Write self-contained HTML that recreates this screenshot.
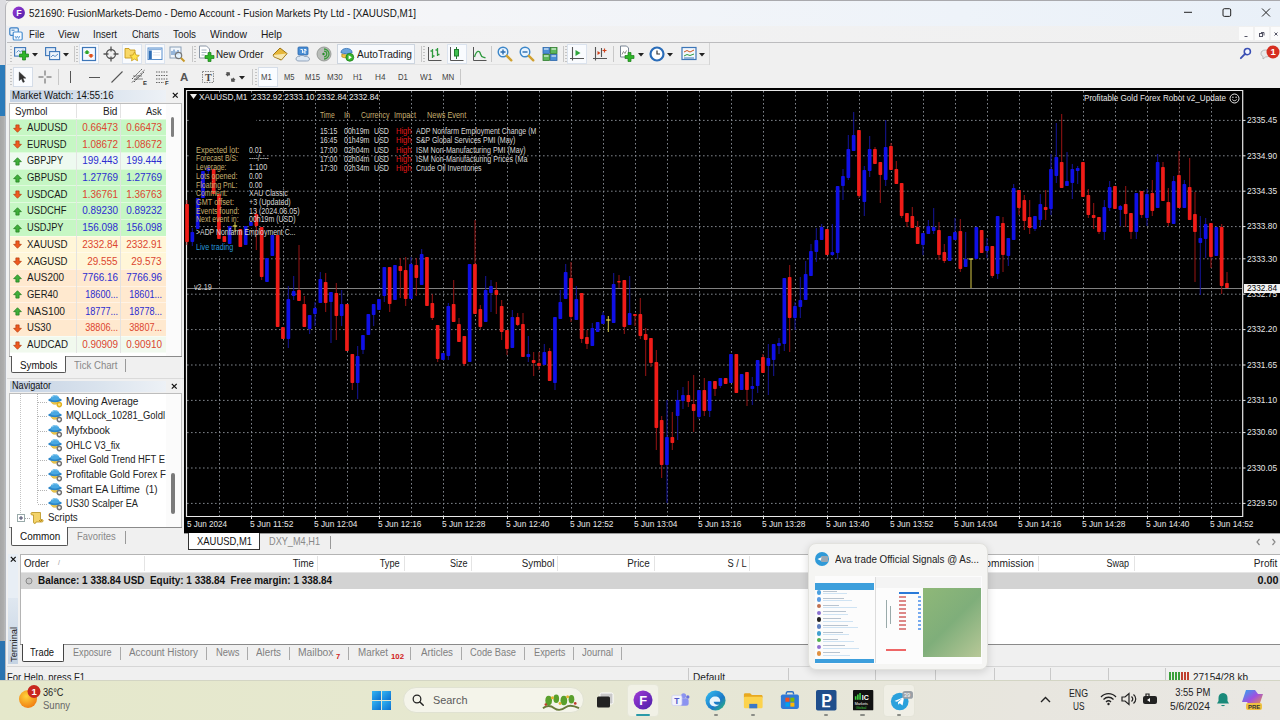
<!DOCTYPE html>
<html lang="en"><head><meta charset="utf-8"><title>521690: FusionMarkets-Demo - Demo Account - [XAUUSD,M1]</title>
<style>
*{box-sizing:border-box;margin:0;padding:0}
html,body{width:1280px;height:720px;overflow:hidden;background:#f0f0f0}
body{font-family:"Liberation Sans","DejaVu Sans",sans-serif;font-size:12px;color:#111}
#root{position:relative;width:1280px;height:720px;overflow:hidden;background:#f0f0f0}
.abs{position:absolute}
.t{position:absolute;white-space:nowrap;line-height:1}
svg{position:absolute;overflow:visible}

</style></head>
<body>
<div id="root">
<div class="abs" style="left:0px;top:0px;width:6px;height:64.5px;background:#dddde1;"></div>
<div class="abs" style="left:0px;top:64.5px;width:6px;height:51px;background:#2b7bba;"></div>
<div class="abs" style="left:0px;top:115.5px;width:6px;height:526px;background:linear-gradient(90deg,#a6a6a6,#adadad 60%,#c4c4c4);"></div>
<div class="abs" style="left:0px;top:641px;width:6px;height:39px;background:#2a73b0;"></div>
<div class="abs" style="left:6px;top:0px;width:1274px;height:1px;background:#a9a9ad;"></div>
<div class="abs" style="left:5px;top:0.8px;width:1275px;height:25px;background:linear-gradient(90deg,#f6f5f3 0%,#f4f5f8 35%,#eef3f9 75%,#e9f0f8 100%);border-top-left-radius:6px;border-left:1px solid #b5b5b9"></div>
<div class="abs" style="left:5px;top:25px;width:2px;height:655px;background:#eef0f4;border-left:1px solid #b5b8be"></div>
<svg style="left:11.700px;top:5.900px" width="13.500" height="13.500" viewBox="0 0 16 16"><defs><linearGradient id="gF" x1="0" y1="0" x2="1" y2="1"><stop offset="0" stop-color="#a13bd6"/><stop offset="1" stop-color="#4b1fa8"/></linearGradient></defs><circle cx="8" cy="8" r="7.3" fill="url(#gF)"/><text x="8.200" y="11.700" text-anchor="middle" font-family="Liberation Sans,sans-serif" font-weight="bold" font-size="10.500" fill="#fff">F</text></svg>
<span class="t " style="left:28.7px;transform-origin:0 50%;top:7.8px;font-size:10.5px;color:#151515;transform:scaleX(0.9393);">521690: FusionMarkets-Demo - Demo Account - Fusion Markets Pty Ltd - [XAUUSD,M1]</span>
<svg style="left:1170px;top:0px" width="110" height="25" viewBox="0 0 110 25"><g stroke="#222" stroke-width="1" fill="none"><path d="M14 12.300h8"/><rect x="53" y="8.700" width="7.700" height="7.700" rx="1.300"/><path d="M92 8.500l8 8M100 8.500l-8 8"/></g></svg>
<div class="abs" style="left:7px;top:25.5px;width:1273px;height:17.5px;background:linear-gradient(90deg,#eef0f4,#f2f2f3 30%,#f0f0f0);"></div>
<div class="abs" style="left:7px;top:42px;width:1273px;height:1px;background:#bcbcbe;"></div>
<svg style="left:9px;top:27px" width="14" height="14" viewBox="0 0 14 14"><rect x="0.8" y="0.8" width="8.5" height="7.5" rx="1.2" fill="#eaf3fb" stroke="#3a7fc4" stroke-width="1.2"/><rect x="4.2" y="5" width="9" height="8" rx="1.2" fill="#f7fbff" stroke="#4a8fd0" stroke-width="1.2"/><path d="M6 9l1.2 2.4 1.2-2.4 1.2 2.4L10.800 9" stroke="#5b9ad6" stroke-width="0.9" fill="none"/><path d="M2.500 3.200h3" stroke="#3a7fc4" stroke-width="1"/></svg>
<span class="t " style="left:28.7px;transform-origin:0 50%;top:28.5px;font-size:10.5px;color:#1a1a1a;transform:scaleX(0.9161);">File</span>
<span class="t " style="left:58px;transform-origin:0 50%;top:28.5px;font-size:10.5px;color:#1a1a1a;transform:scaleX(0.9526);">View</span>
<span class="t " style="left:93.2px;transform-origin:0 50%;top:28.5px;font-size:10.5px;color:#1a1a1a;transform:scaleX(0.9139);">Insert</span>
<span class="t " style="left:131.5px;transform-origin:0 50%;top:28.5px;font-size:10.5px;color:#1a1a1a;transform:scaleX(0.8730);">Charts</span>
<span class="t " style="left:173px;transform-origin:0 50%;top:28.5px;font-size:10.5px;color:#1a1a1a;transform:scaleX(0.9383);">Tools</span>
<span class="t " style="left:210px;transform-origin:0 50%;top:28.5px;font-size:10.5px;color:#1a1a1a;transform:scaleX(0.9907);">Window</span>
<span class="t " style="left:260.7px;transform-origin:0 50%;top:28.5px;font-size:10.5px;color:#1a1a1a;transform:scaleX(0.9724);">Help</span>
<div class="abs" style="left:1238.8px;top:27.4px;width:13.8px;height:12.6px;background:#fbfbfb;"></div>
<div class="abs" style="left:1254.8px;top:27.4px;width:13.8px;height:12.6px;background:#fbfbfb;"></div>
<div class="abs" style="left:1271px;top:27.4px;width:13.8px;height:12.6px;background:#fbfbfb;"></div>
<svg style="left:1239px;top:28px" width="41" height="12" viewBox="0 0 41 12"><g stroke="#556" stroke-width="1" fill="none"><path d="M5.500 8.500h3"/><rect x="20.500" y="5.500" width="3" height="3"/><path d="M22 4.500h3v3"/><path d="M35.500 4.500l3 3M38.500 4.500l-3 3"/></g></svg>
<div class="abs" style="left:7px;top:43px;width:1273px;height:46px;background:#f0f0f0;"></div>
<div class="abs" style="left:7px;top:64px;width:702px;height:1px;background:#e2e2e2;"></div>
<div class="abs" style="left:10px;top:46px;width:2px;height:16px;background:repeating-linear-gradient(#c4c4c4 0 1px,transparent 1px 3px)"></div>
<svg style="left:14px;top:46px" width="16" height="16" viewBox="0 0 16 16"><rect x="0.6" y="1.600" width="11" height="8.500" fill="#e9f2fb" stroke="#3c76b8" stroke-width="1.100"/><path d="M2.500 6.500l2-2 2 1.500 2.500-2.500" stroke="#3c76b8" fill="none" stroke-width=".8"/><path d="M7 10.500h3v-3h3v3h3v3h-3v3h-3v-3H7z" transform="translate(-1.500,-2.500)" fill="#2fb52a" stroke="#1b7d18" stroke-width=".7"/></svg>
<svg style="left:32px;top:53px" width="6" height="4" viewBox="0 0 6 4"><path d="M0 0h6L3 3.500z" fill="#222"/></svg>
<svg style="left:45px;top:46px" width="16" height="16" viewBox="0 0 16 16"><rect x="0.6" y="1.600" width="10" height="8" fill="#dfeaf7" stroke="#3c76b8" stroke-width="1.100"/><rect x="4.600" y="5.600" width="10" height="8" fill="#eef5fc" stroke="#3c76b8" stroke-width="1.100"/><path d="M6 11l2-2 2 1.500 3-2.500" stroke="#3c76b8" fill="none" stroke-width=".8"/></svg>
<svg style="left:63px;top:53px" width="6" height="4" viewBox="0 0 6 4"><path d="M0 0h6L3 3.500z" fill="#222"/></svg>
<div class="abs" style="left:74px;top:46px;width:1px;height:16px;background:#c8c8c8"></div>
<div class="abs" style="left:76px;top:46px;width:2px;height:16px;background:repeating-linear-gradient(#c4c4c4 0 1px,transparent 1px 3px)"></div>
<div class="abs" style="left:79px;top:44px;width:20px;height:20px;background:#f9fbfe;border:1px solid #dbe3ee"></div>
<svg style="left:81px;top:46px" width="16" height="16" viewBox="0 0 16 16"><rect x="1.500" y="1.500" width="13" height="13" fill="#f4f9ff" stroke="#3c76b8" stroke-width="1.200"/><path d="M4.500 4l2.800 2.500H6v1.500H3V6.500h-1.300z" transform="translate(1.500,0)" fill="#2fa52a"/><path d="M10 12l-2.800-2.500H8.500V8h3v1.500h1.300z" fill="#e0521c"/></svg>
<svg style="left:103px;top:46px" width="16" height="16" viewBox="0 0 16 16"><circle cx="8" cy="8" r="4.500" fill="none" stroke="#555" stroke-width="1.300"/><path d="M8 0.500v5M8 10.500v5M.500 8h5M10.500 8h5" stroke="#555" stroke-width="1.300"/></svg>
<div class="abs" style="left:122px;top:44px;width:20px;height:20px;background:#f9fbfe;border:1px solid #dbe3ee"></div>
<svg style="left:124px;top:46px" width="16" height="16" viewBox="0 0 16 16"><path d="M1 2.500h4l1 1.500h5v8H1z" fill="#f8d867" stroke="#c69a1a" stroke-width=".9"/><path d="M10.500 6l1.500 3 3.300.4-2.400 2.200.7 3.200-3.100-1.700-3 1.700.6-3.200L5.800 9.400 9 9z" fill="#ffe24a" stroke="#c69a1a" stroke-width=".8"/></svg>
<div class="abs" style="left:145px;top:44px;width:20px;height:20px;background:#f9fbfe;border:1px solid #dbe3ee"></div>
<svg style="left:147px;top:46px" width="16" height="16" viewBox="0 0 16 16"><rect x="1" y="2" width="14" height="11.500" fill="#fff" stroke="#5a8fcc" stroke-width="1"/><rect x="1.600" y="2.600" width="12.800" height="1.500" fill="#8db4e0"/><rect x="1.800" y="4.500" width="3" height="8.500" fill="#2f6db4"/><path d="M6 6.500h7M6 9h7" stroke="#d5dde8" stroke-width=".7"/></svg>
<svg style="left:169px;top:46px" width="17" height="17" viewBox="0 0 17 17"><rect x="1" y="1" width="11" height="11" fill="#f1f6fb" stroke="#8aa0b8" stroke-width="1"/><path d="M3 9V5M5 9V3.500M7 9V5.500M9 9V4" stroke="#3c76b8" stroke-width="1"/><circle cx="9.500" cy="9.500" r="3.200" fill="#dff1ff" fill-opacity=".8" stroke="#777" stroke-width="1.200"/><path d="M12 12l3.500 3.500" stroke="#c89a2a" stroke-width="2"/></svg>
<div class="abs" style="left:192px;top:46px;width:1px;height:16px;background:#c8c8c8"></div>
<div class="abs" style="left:194px;top:46px;width:2px;height:16px;background:repeating-linear-gradient(#c4c4c4 0 1px,transparent 1px 3px)"></div>
<svg style="left:198px;top:45px" width="17" height="18" viewBox="0 0 17 18"><path d="M1.500 1h7l3 3v9h-10z" fill="#fff" stroke="#8a96a6" stroke-width="1"/><path d="M3.500 5h5M3.500 7.500h5M3.500 10h3" stroke="#9ab" stroke-width=".9"/><path d="M7 10.500h3v-3h3v3h3v3h-3v3h-3v-3H7z" transform="translate(0,0)" fill="#2fb52a" stroke="#1b7d18" stroke-width=".7"/></svg>
<span class="t " style="left:216.2px;transform-origin:0 50%;top:48.8px;font-size:10.5px;color:#1a1a1a;transform:scaleX(0.9357);">New Order</span>
<svg style="left:272px;top:47px" width="16" height="14" viewBox="0 0 16 14"><path d="M1 8l7-7 7 5.500-6 6.500z" fill="#e7b73a" stroke="#9c7413" stroke-width="1"/><path d="M1 8l1 2 7.500 3 5.500-6.500" fill="#f7e7b0" stroke="#9c7413" stroke-width=".8"/></svg>
<svg style="left:295px;top:46px" width="16" height="16" viewBox="0 0 16 16"><rect x="3" y="1" width="10" height="8" rx="1" fill="#4a8fd6" stroke="#2b66aa" stroke-width=".8"/><path d="M5.500 3.500h2v3.500M9 3.500h2v1.500H9v2h2" stroke="#fff" stroke-width=".9" fill="none"/><path d="M1 13c0-2 2-3 3.500-2.500 1-1.500 4-1.500 5 0 2-.5 5 .5 5 2.500s-2 2-3 2H4c-1.500 0-3-.5-3-2z" fill="#dde8f4" stroke="#7d93ad" stroke-width=".8"/></svg>
<svg style="left:316px;top:46px" width="16" height="16" viewBox="0 0 16 16"><circle cx="8" cy="8" r="7" fill="#b9bdb9" stroke="#8a8e8a" stroke-width=".8"/><path d="M8 3a5 5 0 0 1 0 10M8 5.200a2.800 2.800 0 0 1 0 5.600" stroke="#3a9a3a" stroke-width="1.300" fill="none"/><circle cx="7.500" cy="8" r="1.200" fill="#2b8a2b"/></svg>
<div class="abs" style="left:337px;top:44px;width:78px;height:20px;background:#f7f9fc;border:1px solid #cdd5df"></div>
<svg style="left:339px;top:46.500px" width="16" height="15" viewBox="0 0 17 16"><path d="M2 6c0-3 3-4.500 6-4.500S14 3 14 6c-2 1.500-10 1.500-12 0z" fill="#6aa3dc" stroke="#2f6db4" stroke-width=".8"/><path d="M3 7.500c2 1.200 8 1.200 10 0v3c-2 1.500-8 1.500-10 0z" fill="#f0c64a" stroke="#b58a18" stroke-width=".8"/><circle cx="11.500" cy="11" r="4.200" fill="#35b52e" stroke="#1c7d18" stroke-width=".8"/><path d="M10.200 8.800v4.400l3.500-2.200z" fill="#fff"/></svg>
<span class="t " style="left:357.4px;transform-origin:0 50%;top:48.8px;font-size:10.5px;color:#1a1a1a;transform:scaleX(0.9681);">AutoTrading</span>
<div class="abs" style="left:421px;top:46px;width:1px;height:16px;background:#c8c8c8"></div>
<div class="abs" style="left:423px;top:46px;width:2px;height:16px;background:repeating-linear-gradient(#c4c4c4 0 1px,transparent 1px 3px)"></div>
<svg style="left:427px;top:46px" width="16" height="16" viewBox="0 0 16 16"><path d="M1.500 1v13.500h13" stroke="#555" stroke-width="1" fill="none"/><path d="M5.500 3v9M3.500 5h2M5.500 10h2M10.500 2v8M8.500 4h2M10.500 8.500h2" stroke="#2e9a3e" stroke-width="1.300" fill="none"/></svg>
<div class="abs" style="left:447px;top:44px;width:20px;height:20px;background:#f9fbfe;border:1px solid #dbe3ee"></div>
<svg style="left:449px;top:46px" width="16" height="16" viewBox="0 0 16 16"><path d="M1.500 1v13.500h13" stroke="#555" stroke-width="1" fill="none"/><path d="M7.500 1v12" stroke="#1f7d2f" stroke-width="1"/><rect x="5.500" y="3.500" width="4" height="6.500" fill="#3fbf4f" stroke="#1f7d2f" stroke-width="1"/></svg>
<svg style="left:472px;top:46px" width="16" height="16" viewBox="0 0 16 16"><path d="M1.500 1v13.500h13" stroke="#555" stroke-width="1" fill="none"/><path d="M2.500 11c2-7 5-7 6-3s3 3 5 4" stroke="#2e9a3e" stroke-width="1.300" fill="none"/></svg>
<div class="abs" style="left:491px;top:46px;width:1px;height:16px;background:#c8c8c8"></div>
<svg style="left:497px;top:46px" width="16" height="16" viewBox="0 0 16 16"><circle cx="6" cy="6" r="4.800" fill="#e8f4ff" stroke="#3c86c8" stroke-width="1.400"/><path d="M3.500 6h5M6 3.500v5" stroke="#2a6cb0" stroke-width="1.400"/><path d="M9.800 9.800l4.500 4.500" stroke="#d0a030" stroke-width="2.400" stroke-linecap="round"/></svg>
<svg style="left:519px;top:46px" width="16" height="16" viewBox="0 0 16 16"><circle cx="6" cy="6" r="4.800" fill="#e8f4ff" stroke="#3c86c8" stroke-width="1.400"/><path d="M3.500 6h5" stroke="#2a6cb0" stroke-width="1.400"/><path d="M9.800 9.800l4.500 4.500" stroke="#d0a030" stroke-width="2.400" stroke-linecap="round"/></svg>
<svg style="left:542px;top:46px" width="16" height="16" viewBox="0 0 16 16"><rect x="1" y="1.500" width="6.500" height="6" fill="#4a8fd6" stroke="#2b66aa" stroke-width=".8"/><rect x="8.500" y="1.500" width="6.500" height="6" fill="#5cb85c" stroke="#2f7d2f" stroke-width=".8"/><rect x="1" y="8.500" width="6.500" height="6" fill="#5cb85c" stroke="#2f7d2f" stroke-width=".8"/><rect x="8.500" y="8.500" width="6.500" height="6" fill="#4a8fd6" stroke="#2b66aa" stroke-width=".8"/><path d="M2 3h4.500M9.500 3H14M2 10h4.500M9.500 10H14" stroke="#fff" stroke-width="1"/></svg>
<div class="abs" style="left:563px;top:46px;width:1px;height:16px;background:#c8c8c8"></div>
<div class="abs" style="left:565px;top:46px;width:2px;height:16px;background:repeating-linear-gradient(#c4c4c4 0 1px,transparent 1px 3px)"></div>
<div class="abs" style="left:567px;top:44px;width:20px;height:20px;background:#f9fbfe;border:1px solid #dbe3ee"></div>
<svg style="left:569px;top:46px" width="16" height="16" viewBox="0 0 16 16"><path d="M3.500 1v13.500M1 12.500h14" stroke="#555" stroke-width="1.100" fill="none"/><path d="M6.500 4v6l5-3z" fill="#2fa53a"/></svg>
<svg style="left:592px;top:46px" width="16" height="16" viewBox="0 0 16 16"><path d="M3.500 1v13.500M1 12.500h14M9.500 2v9" stroke="#555" stroke-width="1.100" fill="none"/><path d="M10.500 4.500h4M12.500 2.500v4" stroke="#d0421c" stroke-width="1.200"/><path d="M8.500 7l-3-2v4z" fill="#d0421c"/></svg>
<div class="abs" style="left:613px;top:46px;width:1px;height:16px;background:#c8c8c8"></div>
<svg style="left:619px;top:45px" width="17" height="18" viewBox="0 0 17 18"><path d="M1.500 1h6l2 2v9h-8z" fill="#fff" stroke="#7a8696" stroke-width="1"/><path d="M3 9.500l1.500-3 1.500 2 1.500-3" stroke="#777" stroke-width=".8" fill="none"/><path d="M6 10.500h3v-3h3v3h3v3h-3v3H9v-3H6z" fill="#2fb52a" stroke="#1b7d18" stroke-width=".7"/></svg>
<svg style="left:638px;top:53px" width="6" height="4" viewBox="0 0 6 4"><path d="M0 0h6L3 3.500z" fill="#222"/></svg>
<svg style="left:649px;top:46px" width="16" height="16" viewBox="0 0 16 16"><circle cx="8" cy="8" r="6.500" fill="#fff" stroke="#2a6cb8" stroke-width="2.200"/><path d="M8 4.500V8h3" stroke="#333" stroke-width="1.200" fill="none"/></svg>
<svg style="left:667px;top:53px" width="6" height="4" viewBox="0 0 6 4"><path d="M0 0h6L3 3.500z" fill="#222"/></svg>
<svg style="left:681px;top:46px" width="16" height="16" viewBox="0 0 16 16"><rect x="1" y="1.500" width="14" height="12" fill="#f2f7fc" stroke="#3c76b8" stroke-width="1.200"/><path d="M3 6l3-1.500 3 1.500 4-2" stroke="#d0521c" stroke-width="1" fill="none"/><path d="M3 10l3-1.500 3 1 4-1.500" stroke="#2e9a3e" stroke-width="1" fill="none"/><path d="M3 12h10" stroke="#3c76b8" stroke-width="1"/></svg>
<svg style="left:699px;top:53px" width="6" height="4" viewBox="0 0 6 4"><path d="M0 0h6L3 3.500z" fill="#222"/></svg>
<div class="abs" style="left:709px;top:43px;width:1px;height:22px;background:#d5d5d5;"></div>
<svg style="left:1238.500px;top:47px" width="13" height="13" viewBox="0 0 14 14"><circle cx="9" cy="5" r="3.300" fill="#f4f7ff" stroke="#3a4fb4" stroke-width="1.700"/><path d="M6.500 7.500L2 12" stroke="#3a4fb4" stroke-width="2" stroke-linecap="round"/></svg>
<svg style="left:1258px;top:44px" width="22" height="20" viewBox="0 0 22 20"><path d="M3 9.500c0-2 1.600-3.500 4.500-3.500s4.500 1.500 4.500 3.500-1.600 3.500-4.500 3.500l-2.500 2v-2.500C3.800 12 3 10.800 3 9.500z" fill="#e9e9e9" stroke="#aaa" stroke-width=".8"/><circle cx="15" cy="8" r="6.500" fill="#d62d1f"/></svg>
<span class="t " style="left:1270.5px;transform-origin:0 50%;top:47.2px;font-size:9.5px;color:#fff;font-weight:bold;">1</span>
<div class="abs" style="left:10px;top:69px;width:2px;height:16px;background:repeating-linear-gradient(#c4c4c4 0 1px,transparent 1px 3px)"></div>
<div class="abs" style="left:13px;top:67px;width:20px;height:20px;background:#fafcff;border:1px solid #d5dde8"></div>
<svg style="left:18px;top:70.500px" width="9.500" height="13" viewBox="0 0 12 16"><path d="M1.500 1v11l2.800-2.500 2 4.700 1.900-.8-2-4.600H10z" fill="#333" stroke="#222" stroke-width=".5"/></svg>
<svg style="left:37px;top:69px" width="16" height="16" viewBox="0 0 16 16"><path d="M8 1.500v5M8 9.500v5M1.500 8h5M9.500 8h5" stroke="#4a4a4a" stroke-width=".9"/></svg>
<div class="abs" style="left:58px;top:69px;width:1px;height:16px;background:#c8c8c8"></div>
<div class="abs" style="left:70px;top:71px;width:1px;height:12px;background:#555;"></div>
<div class="abs" style="left:89px;top:77px;width:11px;height:1px;background:#555;"></div>
<svg style="left:110px;top:70px" width="14" height="14" viewBox="0 0 14 14"><path d="M1.500 12.500L12.500 1.500" stroke="#555" stroke-width="1.100"/></svg>
<svg style="left:131px;top:68px" width="17" height="17" viewBox="0 0 17 17"><path d="M1 11L11 1M3 14L13 4M1 14.500L14 1.500" stroke="#555" stroke-width="1" stroke-dasharray="2 1"/><path d="M2 8h9M3 11h9" stroke="#555" stroke-width=".7"/></svg>
<span class="t " style="left:143px;transform-origin:0 50%;top:80.0px;font-size:6px;color:#333;font-weight:bold;">E</span>
<svg style="left:155px;top:70px" width="15" height="14" viewBox="0 0 15 14"><path d="M1 2h12M1 5.500h12M1 9h12M1 12.500h8" stroke="#666" stroke-width="1" stroke-dasharray="1.500 1"/></svg>
<span class="t " style="left:165px;transform-origin:0 50%;top:80.0px;font-size:6px;color:#333;font-weight:bold;">F</span>
<span class="t " style="left:180px;transform-origin:0 50%;top:71.8px;font-size:11.5px;color:#555;font-weight:bold;">A</span>
<svg style="left:201px;top:70px" width="14" height="14" viewBox="0 0 14 14"><rect x="1.500" y="1.500" width="11" height="11" fill="none" stroke="#888" stroke-width="1" stroke-dasharray="1.500 1"/></svg>
<span class="t " style="left:205px;transform-origin:0 50%;top:72.5px;font-size:10px;color:#444;font-weight:bold;font-family:'Liberation Serif',serif;">T</span>
<svg style="left:224px;top:71px" width="13" height="12" viewBox="0 0 13 12"><path d="M1 3l3-2.500 3 2.500H5.500v2h-3V3z" fill="#555" transform="rotate(45 4 3)"/><path d="M6 9l3 2.500 3-2.500h-1.500V7h-3v2z" fill="#555" transform="rotate(45 9 9)"/></svg>
<svg style="left:239px;top:76px" width="6" height="4" viewBox="0 0 6 4"><path d="M0 0h6L3 3.500z" fill="#222"/></svg>
<div class="abs" style="left:252px;top:69px;width:1px;height:16px;background:#c8c8c8"></div>
<div class="abs" style="left:255px;top:69px;width:2px;height:16px;background:repeating-linear-gradient(#c4c4c4 0 1px,transparent 1px 3px)"></div>
<div class="abs" style="left:258px;top:67px;width:20px;height:20px;background:#fafcff;border:1px solid #d5dde8"></div>
<span class="t " style="left:261.2px;transform-origin:0 50%;top:72.8px;font-size:8.5px;color:#444;transform:scaleX(0.9146);">M1</span>
<span class="t " style="left:284px;transform-origin:0 50%;top:72.8px;font-size:8.5px;color:#444;transform:scaleX(0.8892);">M5</span>
<span class="t " style="left:304.6px;transform-origin:0 50%;top:72.8px;font-size:8.5px;color:#444;transform:scaleX(0.9071);">M15</span>
<span class="t " style="left:327px;transform-origin:0 50%;top:72.8px;font-size:8.5px;color:#444;transform:scaleX(0.9434);">M30</span>
<span class="t " style="left:352.5px;transform-origin:0 50%;top:72.8px;font-size:8.5px;color:#444;transform:scaleX(0.8743);">H1</span>
<span class="t " style="left:374.5px;transform-origin:0 50%;top:72.8px;font-size:8.5px;color:#444;transform:scaleX(0.9663);">H4</span>
<span class="t " style="left:397.8px;transform-origin:0 50%;top:72.8px;font-size:8.5px;color:#444;transform:scaleX(0.9019);">D1</span>
<span class="t " style="left:419.7px;transform-origin:0 50%;top:72.8px;font-size:8.5px;color:#444;transform:scaleX(0.9647);">W1</span>
<span class="t " style="left:441.7px;transform-origin:0 50%;top:72.8px;font-size:8.5px;color:#444;transform:scaleX(0.9304);">MN</span>
<div class="abs" style="left:460px;top:69px;width:1px;height:16px;background:#c8c8c8"></div>
<div class="abs" style="left:7px;top:88px;width:177px;height:465px;background:#f0f0f0;"></div>
<div class="abs" style="left:10px;top:90px;width:156px;height:11.5px;background:linear-gradient(90deg,#c5d2e3,#dbe4ee 60%,#edf1f6);"></div>
<span class="t " style="left:11.7px;transform-origin:0 50%;top:91.0px;font-size:10px;color:#111;transform:scaleX(0.9594);">Market Watch: 14:55:16</span>
<svg style="left:171.500px;top:92.300px" width="6.500" height="6.500" viewBox="0 0 8 8"><path d="M1 1l6 6M7 1l-6 6" stroke="#111" stroke-width="1.500"/></svg>
<div class="abs" style="left:9px;top:103px;width:173px;height:253.5px;background:#fff;border:1px solid #bdbdbd;border-bottom:none"></div>
<span class="t " style="left:14.6px;transform-origin:0 50%;top:107.0px;font-size:10px;color:#222;transform:scaleX(0.9746);">Symbol</span>
<span class="t " style="right:1162.5px;transform-origin:100% 50%;top:107.0px;font-size:10px;color:#222;transform:scaleX(1.0032);">Bid</span>
<span class="t " style="right:1118.3px;transform-origin:100% 50%;top:107.0px;font-size:10px;color:#222;transform:scaleX(0.9418);">Ask</span>
<div class="abs" style="left:76px;top:104px;width:1px;height:14px;background:#e3e3e3;"></div>
<div class="abs" style="left:120px;top:104px;width:1px;height:14px;background:#e3e3e3;"></div>
<div class="abs" style="left:10px;top:119.2px;width:156px;height:16.68px;background:#c6f7c4;"></div>
<svg style="left:13.3px;top:123.6px" width="9" height="9" viewBox="0 0 10 10"><path d="M5 9.200L9.300 4.800H6.800V1H3.200v3.800H.7z" fill="#ef5a1f" stroke="#b23a0c" stroke-width=".8"/></svg>
<span class="t " style="left:26.5px;transform-origin:0 50%;top:123.0px;font-size:10px;color:#1a1a1a;transform:scaleX(0.9591);">AUDUSD</span>
<span class="t " style="right:1162.0px;transform-origin:100% 50%;top:123.0px;font-size:10px;color:#dc4630;transform:scaleX(0.9931);">0.66473</span>
<span class="t " style="right:1118.3px;transform-origin:100% 50%;top:123.0px;font-size:10px;color:#dc4630;transform:scaleX(0.9931);">0.66473</span>
<div class="abs" style="left:10px;top:135.9px;width:156px;height:16.68px;background:#c6f7c4;"></div>
<svg style="left:13.3px;top:140.29999999999998px" width="9" height="9" viewBox="0 0 10 10"><path d="M5 9.200L9.300 4.800H6.800V1H3.200v3.800H.7z" fill="#ef5a1f" stroke="#b23a0c" stroke-width=".8"/></svg>
<span class="t " style="left:26.5px;transform-origin:0 50%;top:139.7px;font-size:10px;color:#1a1a1a;transform:scaleX(0.9354);">EURUSD</span>
<span class="t " style="right:1162.0px;transform-origin:100% 50%;top:139.7px;font-size:10px;color:#dc4630;transform:scaleX(0.9931);">1.08672</span>
<span class="t " style="right:1118.3px;transform-origin:100% 50%;top:139.7px;font-size:10px;color:#dc4630;transform:scaleX(0.9931);">1.08672</span>
<div class="abs" style="left:10px;top:152.6px;width:156px;height:16.68px;background:#eefaf0;"></div>
<svg style="left:13.3px;top:157.0px" width="9" height="9" viewBox="0 0 10 10"><path d="M5 .800L9.300 5.200H6.800V9H3.200V5.200H.7z" fill="#3fae3a" stroke="#1f7a1c" stroke-width=".8"/></svg>
<span class="t " style="left:26.5px;transform-origin:0 50%;top:156.4px;font-size:10px;color:#1a1a1a;transform:scaleX(0.9123);">GBPJPY</span>
<span class="t " style="right:1162.0px;transform-origin:100% 50%;top:156.4px;font-size:10px;color:#2c2cd0;transform:scaleX(0.9931);">199.443</span>
<span class="t " style="right:1118.3px;transform-origin:100% 50%;top:156.4px;font-size:10px;color:#2c2cd0;transform:scaleX(0.9931);">199.444</span>
<div class="abs" style="left:10px;top:169.2px;width:156px;height:16.68px;background:#c6f7c4;"></div>
<svg style="left:13.3px;top:173.7px" width="9" height="9" viewBox="0 0 10 10"><path d="M5 .800L9.300 5.200H6.800V9H3.200V5.200H.7z" fill="#3fae3a" stroke="#1f7a1c" stroke-width=".8"/></svg>
<span class="t " style="left:26.5px;transform-origin:0 50%;top:173.1px;font-size:10px;color:#1a1a1a;transform:scaleX(0.9471);">GBPUSD</span>
<span class="t " style="right:1162.0px;transform-origin:100% 50%;top:173.1px;font-size:10px;color:#2c2cd0;transform:scaleX(0.9931);">1.27769</span>
<span class="t " style="right:1118.3px;transform-origin:100% 50%;top:173.1px;font-size:10px;color:#2c2cd0;transform:scaleX(0.9931);">1.27769</span>
<div class="abs" style="left:10px;top:185.9px;width:156px;height:16.68px;background:#c6f7c4;"></div>
<svg style="left:13.3px;top:190.4px" width="9" height="9" viewBox="0 0 10 10"><path d="M5 9.200L9.300 4.800H6.800V1H3.200v3.800H.7z" fill="#ef5a1f" stroke="#b23a0c" stroke-width=".8"/></svg>
<span class="t " style="left:26.5px;transform-origin:0 50%;top:189.8px;font-size:10px;color:#1a1a1a;transform:scaleX(0.9591);">USDCAD</span>
<span class="t " style="right:1162.0px;transform-origin:100% 50%;top:189.8px;font-size:10px;color:#dc4630;transform:scaleX(0.9931);">1.36761</span>
<span class="t " style="right:1118.3px;transform-origin:100% 50%;top:189.8px;font-size:10px;color:#dc4630;transform:scaleX(0.9931);">1.36763</span>
<div class="abs" style="left:10px;top:202.6px;width:156px;height:16.68px;background:#c6f7c4;"></div>
<svg style="left:13.3px;top:207.0px" width="9" height="9" viewBox="0 0 10 10"><path d="M5 .800L9.300 5.200H6.800V9H3.200V5.200H.7z" fill="#3fae3a" stroke="#1f7a1c" stroke-width=".8"/></svg>
<span class="t " style="left:26.5px;transform-origin:0 50%;top:206.4px;font-size:10px;color:#1a1a1a;transform:scaleX(0.9480);">USDCHF</span>
<span class="t " style="right:1162.0px;transform-origin:100% 50%;top:206.4px;font-size:10px;color:#2c2cd0;transform:scaleX(0.9931);">0.89230</span>
<span class="t " style="right:1118.3px;transform-origin:100% 50%;top:206.4px;font-size:10px;color:#2c2cd0;transform:scaleX(0.9931);">0.89232</span>
<div class="abs" style="left:10px;top:219.3px;width:156px;height:16.68px;background:#c6f7c4;"></div>
<svg style="left:13.3px;top:223.7px" width="9" height="9" viewBox="0 0 10 10"><path d="M5 .800L9.300 5.200H6.800V9H3.200V5.200H.7z" fill="#3fae3a" stroke="#1f7a1c" stroke-width=".8"/></svg>
<span class="t " style="left:26.5px;transform-origin:0 50%;top:223.1px;font-size:10px;color:#1a1a1a;transform:scaleX(0.9251);">USDJPY</span>
<span class="t " style="right:1162.0px;transform-origin:100% 50%;top:223.1px;font-size:10px;color:#2c2cd0;transform:scaleX(0.9931);">156.098</span>
<span class="t " style="right:1118.3px;transform-origin:100% 50%;top:223.1px;font-size:10px;color:#2c2cd0;transform:scaleX(0.9931);">156.098</span>
<div class="abs" style="left:10px;top:236.0px;width:156px;height:16.68px;background:#fff6d8;"></div>
<svg style="left:13.3px;top:240.4px" width="9" height="9" viewBox="0 0 10 10"><path d="M5 9.200L9.300 4.800H6.800V1H3.200v3.800H.7z" fill="#ef5a1f" stroke="#b23a0c" stroke-width=".8"/></svg>
<span class="t " style="left:26.5px;transform-origin:0 50%;top:239.8px;font-size:10px;color:#1a1a1a;transform:scaleX(0.9718);">XAUUSD</span>
<span class="t " style="right:1162.0px;transform-origin:100% 50%;top:239.8px;font-size:10px;color:#dc4630;transform:scaleX(0.9931);">2332.84</span>
<span class="t " style="right:1118.3px;transform-origin:100% 50%;top:239.8px;font-size:10px;color:#dc4630;transform:scaleX(0.9931);">2332.91</span>
<div class="abs" style="left:10px;top:252.6px;width:156px;height:16.68px;background:#fff6d8;"></div>
<svg style="left:13.3px;top:257.1px" width="9" height="9" viewBox="0 0 10 10"><path d="M5 9.200L9.300 4.800H6.800V1H3.200v3.800H.7z" fill="#ef5a1f" stroke="#b23a0c" stroke-width=".8"/></svg>
<span class="t " style="left:26.5px;transform-origin:0 50%;top:256.5px;font-size:10px;color:#1a1a1a;transform:scaleX(0.9590);">XAGUSD</span>
<span class="t " style="right:1162.0px;transform-origin:100% 50%;top:256.5px;font-size:10px;color:#dc4630;transform:scaleX(0.9923);">29.555</span>
<span class="t " style="right:1118.3px;transform-origin:100% 50%;top:256.5px;font-size:10px;color:#dc4630;transform:scaleX(0.9923);">29.573</span>
<div class="abs" style="left:10px;top:269.3px;width:156px;height:16.68px;background:#ffe9cf;"></div>
<svg style="left:13.3px;top:273.8px" width="9" height="9" viewBox="0 0 10 10"><path d="M5 .800L9.300 5.200H6.800V9H3.200V5.200H.7z" fill="#3fae3a" stroke="#1f7a1c" stroke-width=".8"/></svg>
<span class="t " style="left:26.5px;transform-origin:0 50%;top:273.2px;font-size:10px;color:#1a1a1a;transform:scaleX(0.9934);">AUS200</span>
<span class="t " style="right:1162.0px;transform-origin:100% 50%;top:273.2px;font-size:10px;color:#2c2cd0;transform:scaleX(0.9931);">7766.16</span>
<span class="t " style="right:1118.3px;transform-origin:100% 50%;top:273.2px;font-size:10px;color:#2c2cd0;transform:scaleX(0.9931);">7766.96</span>
<div class="abs" style="left:10px;top:286.0px;width:156px;height:16.68px;background:#ffe9cf;"></div>
<svg style="left:13.3px;top:290.40000000000003px" width="9" height="9" viewBox="0 0 10 10"><path d="M5 .800L9.300 5.200H6.800V9H3.200V5.200H.7z" fill="#3fae3a" stroke="#1f7a1c" stroke-width=".8"/></svg>
<span class="t " style="left:26.5px;transform-origin:0 50%;top:289.8px;font-size:10px;color:#1a1a1a;transform:scaleX(0.9453);">GER40</span>
<span class="t " style="right:1162.0px;transform-origin:100% 50%;top:289.8px;font-size:10px;color:#2c2cd0;transform:scaleX(0.9130);">18600...</span>
<span class="t " style="right:1118.3px;transform-origin:100% 50%;top:289.8px;font-size:10px;color:#2c2cd0;transform:scaleX(0.9130);">18601...</span>
<div class="abs" style="left:10px;top:302.7px;width:156px;height:16.68px;background:#ffe9cf;"></div>
<svg style="left:13.3px;top:307.1px" width="9" height="9" viewBox="0 0 10 10"><path d="M5 .800L9.300 5.200H6.800V9H3.200V5.200H.7z" fill="#3fae3a" stroke="#1f7a1c" stroke-width=".8"/></svg>
<span class="t " style="left:26.5px;transform-origin:0 50%;top:306.5px;font-size:10px;color:#1a1a1a;transform:scaleX(1.0202);">NAS100</span>
<span class="t " style="right:1162.0px;transform-origin:100% 50%;top:306.5px;font-size:10px;color:#2c2cd0;transform:scaleX(0.9130);">18777...</span>
<span class="t " style="right:1118.3px;transform-origin:100% 50%;top:306.5px;font-size:10px;color:#2c2cd0;transform:scaleX(0.9130);">18778...</span>
<div class="abs" style="left:10px;top:319.4px;width:156px;height:16.68px;background:#ffe9cf;"></div>
<svg style="left:13.3px;top:323.8px" width="9" height="9" viewBox="0 0 10 10"><path d="M5 9.200L9.300 4.800H6.800V1H3.200v3.800H.7z" fill="#ef5a1f" stroke="#b23a0c" stroke-width=".8"/></svg>
<span class="t " style="left:26.5px;transform-origin:0 50%;top:323.2px;font-size:10px;color:#1a1a1a;transform:scaleX(0.9594);">US30</span>
<span class="t " style="right:1162.0px;transform-origin:100% 50%;top:323.2px;font-size:10px;color:#dc4630;transform:scaleX(0.9130);">38806...</span>
<span class="t " style="right:1118.3px;transform-origin:100% 50%;top:323.2px;font-size:10px;color:#dc4630;transform:scaleX(0.9130);">38807...</span>
<div class="abs" style="left:10px;top:336.0px;width:156px;height:16.68px;background:#f1f9ee;"></div>
<svg style="left:13.3px;top:340.5px" width="9" height="9" viewBox="0 0 10 10"><path d="M5 9.200L9.300 4.800H6.800V1H3.200v3.800H.7z" fill="#ef5a1f" stroke="#b23a0c" stroke-width=".8"/></svg>
<span class="t " style="left:26.5px;transform-origin:0 50%;top:339.9px;font-size:10px;color:#1a1a1a;transform:scaleX(0.9709);">AUDCAD</span>
<span class="t " style="right:1162.0px;transform-origin:100% 50%;top:339.9px;font-size:10px;color:#dc4630;transform:scaleX(0.9931);">0.90909</span>
<span class="t " style="right:1118.3px;transform-origin:100% 50%;top:339.9px;font-size:10px;color:#dc4630;transform:scaleX(0.9931);">0.90910</span>
<div class="abs" style="left:10px;top:118.7px;width:156px;height:1px;background:rgba(255,255,255,.45);"></div>
<div class="abs" style="left:10px;top:135.4px;width:156px;height:1px;background:rgba(255,255,255,.45);"></div>
<div class="abs" style="left:10px;top:152.1px;width:156px;height:1px;background:rgba(255,255,255,.45);"></div>
<div class="abs" style="left:10px;top:168.7px;width:156px;height:1px;background:rgba(255,255,255,.45);"></div>
<div class="abs" style="left:10px;top:185.4px;width:156px;height:1px;background:rgba(255,255,255,.45);"></div>
<div class="abs" style="left:10px;top:202.1px;width:156px;height:1px;background:rgba(255,255,255,.45);"></div>
<div class="abs" style="left:10px;top:218.8px;width:156px;height:1px;background:rgba(255,255,255,.45);"></div>
<div class="abs" style="left:10px;top:235.5px;width:156px;height:1px;background:rgba(255,255,255,.45);"></div>
<div class="abs" style="left:10px;top:252.1px;width:156px;height:1px;background:rgba(255,255,255,.45);"></div>
<div class="abs" style="left:10px;top:268.8px;width:156px;height:1px;background:rgba(255,255,255,.45);"></div>
<div class="abs" style="left:10px;top:285.5px;width:156px;height:1px;background:rgba(255,255,255,.45);"></div>
<div class="abs" style="left:10px;top:302.2px;width:156px;height:1px;background:rgba(255,255,255,.45);"></div>
<div class="abs" style="left:10px;top:318.9px;width:156px;height:1px;background:rgba(255,255,255,.45);"></div>
<div class="abs" style="left:10px;top:335.5px;width:156px;height:1px;background:rgba(255,255,255,.45);"></div>
<div class="abs" style="left:10px;top:352.2px;width:156px;height:1px;background:rgba(255,255,255,.45);"></div>
<div class="abs" style="left:76px;top:119px;width:1px;height:234px;background:rgba(225,225,225,.9);"></div>
<div class="abs" style="left:120px;top:119px;width:1px;height:234px;background:rgba(225,225,225,.9);"></div>
<div class="abs" style="left:166px;top:104px;width:15px;height:251.5px;background:#fbfbfb;"></div>
<div class="abs" style="left:171px;top:116.5px;width:3px;height:20.5px;background:#808080;border-radius:2px"></div>
<div class="abs" style="left:9px;top:355.8px;width:173px;height:1px;background:#8a8a8a;"></div>
<div class="abs" style="left:10.5px;top:355.8px;width:55.5px;height:17.5px;background:#fff;border:1px solid #555;border-top:none;border-radius:0 0 2px 2px"></div>
<span class="t " style="left:19.6px;transform-origin:0 50%;top:360.5px;font-size:10px;color:#111;transform:scaleX(0.9779);">Symbols</span>
<span class="t " style="left:74px;transform-origin:0 50%;top:360.5px;font-size:10px;color:#888;transform:scaleX(0.9626);">Tick Chart</span>
<div class="abs" style="left:125px;top:359px;width:1px;height:13px;background:#999;"></div>
<div class="abs" style="left:7px;top:377.5px;width:177px;height:1px;background:#dadada;"></div>
<div class="abs" style="left:10px;top:380.5px;width:156px;height:11px;background:linear-gradient(90deg,#c5d2e3,#dbe4ee 60%,#edf1f6);"></div>
<span class="t " style="left:11.9px;transform-origin:0 50%;top:381.3px;font-size:10px;color:#111;transform:scaleX(0.9112);">Navigator</span>
<svg style="left:171px;top:382.800px" width="6.500" height="6.500" viewBox="0 0 8 8"><path d="M1 1l6 6M7 1l-6 6" stroke="#111" stroke-width="1.500"/></svg>
<div class="abs" style="left:9px;top:393px;width:173px;height:135px;background:#fff;border:1px solid #bdbdbd;border-bottom:none"></div>
<div class="abs" style="left:37px;top:394px;width:1px;height:110px;background:repeating-linear-gradient(#b4b4b4 0 1px,transparent 1px 2px);"></div>
<div class="abs" style="left:20px;top:394px;width:1px;height:120px;background:repeating-linear-gradient(#c4c4c4 0 1px,transparent 1px 2px);"></div>
<div class="abs" style="left:38px;top:402px;width:9px;height:1px;background:repeating-linear-gradient(90deg,#b4b4b4 0 1px,transparent 1px 2px);"></div>
<svg style="left:47.5px;top:394.2px" width="15" height="13.500" viewBox="0 0 15 13.500"><path d="M3 7.200C3.600 11.400 9.900 11.400 10.500 7.200z" fill="#f2c94a" stroke="#c99a20" stroke-width=".5"/><ellipse cx="7" cy="6" rx="6.800" ry="2.200" fill="#2c86c8"/><path d="M2.600 5.600C2.400 -.4 11.600 -.4 11.400 5.600C9 6.800 5 6.800 2.600 5.600z" fill="#49a8e2"/><path d="M4 3.200C5 1.400 8 1.200 9.500 2.200" stroke="#9bd4f4" stroke-width="1" fill="none"/><circle cx="11.300" cy="10.600" r="2.100" fill="#ffe680" stroke="#e0b020" stroke-width="1.400"/></svg>
<span class="t " style="left:66px;transform-origin:0 50%;top:396.5px;font-size:10px;color:#222;transform:scaleX(1.0135);">Moving Average</span>
<div class="abs" style="left:38px;top:416px;width:9px;height:1px;background:repeating-linear-gradient(90deg,#b4b4b4 0 1px,transparent 1px 2px);"></div>
<svg style="left:47.5px;top:408.9px" width="15" height="13.500" viewBox="0 0 15 13.500"><path d="M3 7.200C3.600 11.400 9.900 11.400 10.500 7.200z" fill="#f2c94a" stroke="#c99a20" stroke-width=".5"/><ellipse cx="7" cy="6" rx="6.800" ry="2.200" fill="#2c86c8"/><path d="M2.600 5.600C2.400 -.4 11.600 -.4 11.400 5.600C9 6.800 5 6.800 2.600 5.600z" fill="#49a8e2"/><path d="M4 3.200C5 1.400 8 1.200 9.500 2.200" stroke="#9bd4f4" stroke-width="1" fill="none"/><circle cx="11.300" cy="10.600" r="2.100" fill="#f4f4f4" stroke="#707070" stroke-width="1.400"/></svg>
<span class="t " style="left:66px;transform-origin:0 50%;top:411.2px;font-size:10px;color:#222;transform:scaleX(0.9422);">MQLLock_10281_Goldl</span>
<div class="abs" style="left:38px;top:431px;width:9px;height:1px;background:repeating-linear-gradient(90deg,#b4b4b4 0 1px,transparent 1px 2px);"></div>
<svg style="left:47.5px;top:423.6px" width="15" height="13.500" viewBox="0 0 15 13.500"><path d="M3 7.200C3.600 11.400 9.900 11.400 10.500 7.200z" fill="#f2c94a" stroke="#c99a20" stroke-width=".5"/><ellipse cx="7" cy="6" rx="6.800" ry="2.200" fill="#2c86c8"/><path d="M2.600 5.600C2.400 -.4 11.600 -.4 11.400 5.600C9 6.800 5 6.800 2.600 5.600z" fill="#49a8e2"/><path d="M4 3.200C5 1.400 8 1.200 9.500 2.200" stroke="#9bd4f4" stroke-width="1" fill="none"/><circle cx="11.300" cy="10.600" r="2.100" fill="#f4f4f4" stroke="#707070" stroke-width="1.400"/></svg>
<span class="t " style="left:66px;transform-origin:0 50%;top:425.9px;font-size:10px;color:#222;transform:scaleX(1.0282);">Myfxbook</span>
<div class="abs" style="left:38px;top:446px;width:9px;height:1px;background:repeating-linear-gradient(90deg,#b4b4b4 0 1px,transparent 1px 2px);"></div>
<svg style="left:47.5px;top:438.3px" width="15" height="13.500" viewBox="0 0 15 13.500"><path d="M3 7.200C3.600 11.400 9.900 11.400 10.500 7.200z" fill="#f2c94a" stroke="#c99a20" stroke-width=".5"/><ellipse cx="7" cy="6" rx="6.800" ry="2.200" fill="#2c86c8"/><path d="M2.600 5.600C2.400 -.4 11.600 -.4 11.400 5.600C9 6.800 5 6.800 2.600 5.600z" fill="#49a8e2"/><path d="M4 3.200C5 1.400 8 1.200 9.500 2.200" stroke="#9bd4f4" stroke-width="1" fill="none"/><circle cx="11.300" cy="10.600" r="2.100" fill="#f4f4f4" stroke="#707070" stroke-width="1.400"/></svg>
<span class="t " style="left:66px;transform-origin:0 50%;top:440.6px;font-size:10px;color:#222;transform:scaleX(0.9254);">OHLC V3_fix</span>
<div class="abs" style="left:38px;top:460px;width:9px;height:1px;background:repeating-linear-gradient(90deg,#b4b4b4 0 1px,transparent 1px 2px);"></div>
<svg style="left:47.5px;top:453.0px" width="15" height="13.500" viewBox="0 0 15 13.500"><path d="M3 7.200C3.600 11.400 9.900 11.400 10.500 7.200z" fill="#f2c94a" stroke="#c99a20" stroke-width=".5"/><ellipse cx="7" cy="6" rx="6.800" ry="2.200" fill="#2c86c8"/><path d="M2.600 5.600C2.400 -.4 11.600 -.4 11.400 5.600C9 6.800 5 6.800 2.600 5.600z" fill="#49a8e2"/><path d="M4 3.200C5 1.400 8 1.200 9.500 2.200" stroke="#9bd4f4" stroke-width="1" fill="none"/><circle cx="11.300" cy="10.600" r="2.100" fill="#f4f4f4" stroke="#707070" stroke-width="1.400"/></svg>
<span class="t " style="left:66px;transform-origin:0 50%;top:455.3px;font-size:10px;color:#222;transform:scaleX(0.9392);">Pixel Gold Trend HFT E</span>
<div class="abs" style="left:38px;top:475px;width:9px;height:1px;background:repeating-linear-gradient(90deg,#b4b4b4 0 1px,transparent 1px 2px);"></div>
<svg style="left:47.5px;top:467.7px" width="15" height="13.500" viewBox="0 0 15 13.500"><path d="M3 7.200C3.600 11.400 9.900 11.400 10.500 7.200z" fill="#f2c94a" stroke="#c99a20" stroke-width=".5"/><ellipse cx="7" cy="6" rx="6.800" ry="2.200" fill="#2c86c8"/><path d="M2.600 5.600C2.400 -.4 11.600 -.4 11.400 5.600C9 6.800 5 6.800 2.600 5.600z" fill="#49a8e2"/><path d="M4 3.200C5 1.400 8 1.200 9.500 2.200" stroke="#9bd4f4" stroke-width="1" fill="none"/><circle cx="11.300" cy="10.600" r="2.100" fill="#f4f4f4" stroke="#707070" stroke-width="1.400"/></svg>
<span class="t " style="left:66px;transform-origin:0 50%;top:470.0px;font-size:10px;color:#222;transform:scaleX(0.9673);">Profitable Gold Forex F</span>
<div class="abs" style="left:38px;top:490px;width:9px;height:1px;background:repeating-linear-gradient(90deg,#b4b4b4 0 1px,transparent 1px 2px);"></div>
<svg style="left:47.5px;top:482.4px" width="15" height="13.500" viewBox="0 0 15 13.500"><path d="M3 7.200C3.600 11.400 9.900 11.400 10.500 7.200z" fill="#f2c94a" stroke="#c99a20" stroke-width=".5"/><ellipse cx="7" cy="6" rx="6.800" ry="2.200" fill="#2c86c8"/><path d="M2.600 5.600C2.400 -.4 11.600 -.4 11.400 5.600C9 6.800 5 6.800 2.600 5.600z" fill="#49a8e2"/><path d="M4 3.200C5 1.400 8 1.200 9.500 2.200" stroke="#9bd4f4" stroke-width="1" fill="none"/><circle cx="11.300" cy="10.600" r="2.100" fill="#f4f4f4" stroke="#707070" stroke-width="1.400"/></svg>
<span class="t " style="left:66px;transform-origin:0 50%;top:484.7px;font-size:10px;color:#222;transform:scaleX(0.9919);">Smart EA Liftime&nbsp; (1)</span>
<div class="abs" style="left:38px;top:504px;width:9px;height:1px;background:repeating-linear-gradient(90deg,#b4b4b4 0 1px,transparent 1px 2px);"></div>
<svg style="left:47.5px;top:497.1px" width="15" height="13.500" viewBox="0 0 15 13.500"><path d="M3 7.200C3.600 11.400 9.900 11.400 10.500 7.200z" fill="#f2c94a" stroke="#c99a20" stroke-width=".5"/><ellipse cx="7" cy="6" rx="6.800" ry="2.200" fill="#2c86c8"/><path d="M2.600 5.600C2.400 -.4 11.600 -.4 11.400 5.600C9 6.800 5 6.800 2.600 5.600z" fill="#49a8e2"/><path d="M4 3.200C5 1.400 8 1.200 9.500 2.200" stroke="#9bd4f4" stroke-width="1" fill="none"/><circle cx="11.300" cy="10.600" r="2.100" fill="#f4f4f4" stroke="#707070" stroke-width="1.400"/></svg>
<span class="t " style="left:66px;transform-origin:0 50%;top:499.4px;font-size:10px;color:#222;transform:scaleX(0.9252);">US30 Scalper EA</span>
<div class="abs" style="left:166px;top:394px;width:15px;height:133px;background:#fbfbfb;"></div>
<div class="abs" style="left:17px;top:514px;width:8px;height:8px;background:#fff;border:1px solid #9aa"></div>
<svg style="left:17px;top:514px" width="8" height="8" viewBox="0 0 8 8"><path d="M2 4h4M4 2v4" stroke="#446" stroke-width="1"/></svg>
<div class="abs" style="left:25px;top:518px;width:6px;height:1px;background:repeating-linear-gradient(90deg,#aaa 0 1px,transparent 1px 2px);"></div>
<svg style="left:30px;top:511px" width="14" height="14" viewBox="0 0 14 14"><path d="M2 1.500c-1.500 0-1.500 2.500 0 2.500h1.500v7c0 2 2.500 2 2.500 0h6c1.500 0 1.500-2.500 0-2.500H10.500v-7z" fill="#f3d36a" stroke="#b8901c" stroke-width=".8"/><path d="M9 9l1.500 1.500 1.500-1.500" fill="#e9b93a" stroke="#a97a10" stroke-width=".8"/></svg>
<span class="t " style="left:48.3px;transform-origin:0 50%;top:513.3px;font-size:10px;color:#222;transform:scaleX(0.9718);">Scripts</span>
<div class="abs" style="left:171px;top:473px;width:3.5px;height:41px;background:#7a7a7a;border-radius:2px"></div>
<div class="abs" style="left:9px;top:527px;width:173px;height:1px;background:#8a8a8a;"></div>
<div class="abs" style="left:11px;top:527px;width:57px;height:19px;background:#fff;border:1px solid #555;border-top:none;border-radius:0 0 2px 2px"></div>
<span class="t " style="left:19.8px;transform-origin:0 50%;top:532.0px;font-size:10px;color:#111;transform:scaleX(0.9909);">Common</span>
<span class="t " style="left:77.3px;transform-origin:0 50%;top:532.0px;font-size:10px;color:#888;transform:scaleX(0.9411);">Favorites</span>
<div class="abs" style="left:125px;top:531px;width:1px;height:13px;background:#999;"></div>
<div class="abs" style="left:184px;top:88px;width:1096px;height:445px;background:#000;"></div>
<svg style="left:0;top:0" width="1280" height="720" viewBox="0 0 1280 720" shape-rendering="auto">
<g stroke="#8d939b" stroke-width=".9" stroke-dasharray="1.600 2.400" fill="none">
<path d="M219.5 91V516"/>
<path d="M251.5 91V516"/>
<path d="M283.5 91V516"/>
<path d="M315.5 91V516"/>
<path d="M347.5 91V516"/>
<path d="M379.5 91V516"/>
<path d="M411.5 91V516"/>
<path d="M443.5 91V516"/>
<path d="M475.5 91V516"/>
<path d="M507.5 91V516"/>
<path d="M539.5 91V516"/>
<path d="M571.5 91V516"/>
<path d="M603.5 91V516"/>
<path d="M635.5 91V516"/>
<path d="M667.5 91V516"/>
<path d="M699.5 91V516"/>
<path d="M731.5 91V516"/>
<path d="M763.5 91V516"/>
<path d="M795.5 91V516"/>
<path d="M827.5 91V516"/>
<path d="M859.5 91V516"/>
<path d="M891.5 91V516"/>
<path d="M923.5 91V516"/>
<path d="M955.5 91V516"/>
<path d="M987.5 91V516"/>
<path d="M1019.5 91V516"/>
<path d="M1051.5 91V516"/>
<path d="M1083.5 91V516"/>
<path d="M1115.5 91V516"/>
<path d="M1147.5 91V516"/>
<path d="M1179.5 91V516"/>
<path d="M1211.5 91V516"/>
<path d="M187 120.4H1242"/>
<path d="M187 155.8H1242"/>
<path d="M187 191.2H1242"/>
<path d="M187 226.6H1242"/>
<path d="M187 258.8H1242"/>
<path d="M187 294.2H1242"/>
<path d="M187 329.6H1242"/>
<path d="M187 365.0H1242"/>
<path d="M187 400.4H1242"/>
<path d="M187 432.6H1242"/>
<path d="M187 468.0H1242"/>
<path d="M187 503.4H1242"/>
</g>
<rect x="190" y="100" width="66" height="88" fill="#000"/><rect x="217" y="188" width="5" height="68" fill="#000"/><rect x="249" y="188" width="5" height="40" fill="#000"/>
<path d="M186.500 90.500H1242.700V516.500H186.500z" stroke="#e8e8e8" stroke-width="1.200" fill="none"/>
<path d="M251.5 516v3" stroke="#e8e8e8" stroke-width="1"/>
<path d="M315.5 516v3" stroke="#e8e8e8" stroke-width="1"/>
<path d="M379.5 516v3" stroke="#e8e8e8" stroke-width="1"/>
<path d="M443.5 516v3" stroke="#e8e8e8" stroke-width="1"/>
<path d="M507.5 516v3" stroke="#e8e8e8" stroke-width="1"/>
<path d="M571.5 516v3" stroke="#e8e8e8" stroke-width="1"/>
<path d="M635.5 516v3" stroke="#e8e8e8" stroke-width="1"/>
<path d="M699.5 516v3" stroke="#e8e8e8" stroke-width="1"/>
<path d="M763.5 516v3" stroke="#e8e8e8" stroke-width="1"/>
<path d="M827.5 516v3" stroke="#e8e8e8" stroke-width="1"/>
<path d="M891.5 516v3" stroke="#e8e8e8" stroke-width="1"/>
<path d="M955.5 516v3" stroke="#e8e8e8" stroke-width="1"/>
<path d="M1019.5 516v3" stroke="#e8e8e8" stroke-width="1"/>
<path d="M1083.5 516v3" stroke="#e8e8e8" stroke-width="1"/>
<path d="M1147.5 516v3" stroke="#e8e8e8" stroke-width="1"/>
<path d="M1211.5 516v3" stroke="#e8e8e8" stroke-width="1"/>
<path d="M1242.500 120.4h3" stroke="#e8e8e8" stroke-width="1"/>
<path d="M1242.500 155.8h3" stroke="#e8e8e8" stroke-width="1"/>
<path d="M1242.500 191.2h3" stroke="#e8e8e8" stroke-width="1"/>
<path d="M1242.500 226.6h3" stroke="#e8e8e8" stroke-width="1"/>
<path d="M1242.500 258.8h3" stroke="#e8e8e8" stroke-width="1"/>
<path d="M1242.500 294.2h3" stroke="#e8e8e8" stroke-width="1"/>
<path d="M1242.500 329.6h3" stroke="#e8e8e8" stroke-width="1"/>
<path d="M1242.500 365.0h3" stroke="#e8e8e8" stroke-width="1"/>
<path d="M1242.500 400.4h3" stroke="#e8e8e8" stroke-width="1"/>
<path d="M1242.500 432.6h3" stroke="#e8e8e8" stroke-width="1"/>
<path d="M1242.500 468.0h3" stroke="#e8e8e8" stroke-width="1"/>
<path d="M1242.500 503.4h3" stroke="#e8e8e8" stroke-width="1"/>
<path d="M187 288.500H1242" stroke="#8e8e8e" stroke-width=".9"/>
<path d="M187.0 200.0V245.0" stroke="#981414" stroke-width="1"/>
<rect x="185.2" y="204.0" width="3.7" height="38.0" fill="#f01c18" rx=".8"/>
<path d="M192.3 228.0V246.0" stroke="#15159c" stroke-width="1"/>
<rect x="190.5" y="232.0" width="3.7" height="10.0" fill="#1010e6" rx=".8"/>
<rect x="195.8" y="198.0" width="3.7" height="31.0" fill="#1010e6" rx=".8"/>
<rect x="201.1" y="171.0" width="3.7" height="27.0" fill="#1010e6" rx=".8"/>
<path d="M208.3 165.0V174.0" stroke="#15159c" stroke-width="1"/>
<rect x="206.5" y="168.0" width="3.7" height="3.0" fill="#1010e6" rx=".8"/>
<rect x="211.8" y="169.0" width="3.7" height="25.0" fill="#f01c18" rx=".8"/>
<rect x="217.1" y="194.0" width="3.7" height="45.0" fill="#f01c18" rx=".8"/>
<rect x="222.5" y="236.0" width="3.7" height="6.0" fill="#f01c18" rx=".8"/>
<rect x="227.8" y="226.0" width="3.7" height="18.0" fill="#1010e6" rx=".8"/>
<path d="M235.0 222.0V232.0" stroke="#d8ca48" stroke-width="1"/>
<path d="M232.8 226.0h4.400" stroke="#e6d850" stroke-width="1.200"/>
<rect x="238.5" y="229.0" width="3.7" height="18.0" fill="#f01c18" rx=".8"/>
<rect x="243.8" y="226.0" width="3.7" height="19.0" fill="#1010e6" rx=".8"/>
<rect x="249.1" y="222.0" width="3.7" height="4.0" fill="#1010e6" rx=".8"/>
<path d="M256.3 210.0V250.0" stroke="#981414" stroke-width="1"/>
<rect x="254.5" y="214.0" width="3.7" height="12.0" fill="#f01c18" rx=".8"/>
<path d="M261.7 227.0V280.0" stroke="#981414" stroke-width="1"/>
<rect x="259.8" y="227.0" width="3.7" height="50.0" fill="#f01c18" rx=".8"/>
<rect x="265.1" y="258.0" width="3.7" height="24.0" fill="#1010e6" rx=".8"/>
<rect x="270.5" y="235.0" width="3.7" height="21.0" fill="#1010e6" rx=".8"/>
<rect x="275.8" y="235.0" width="3.7" height="92.0" fill="#f01c18" rx=".8"/>
<rect x="281.1" y="327.0" width="3.7" height="12.0" fill="#f01c18" rx=".8"/>
<path d="M288.3 286.0V348.0" stroke="#15159c" stroke-width="1"/>
<rect x="286.5" y="299.0" width="3.7" height="40.0" fill="#1010e6" rx=".8"/>
<path d="M293.7 276.0V300.0" stroke="#15159c" stroke-width="1"/>
<rect x="291.8" y="291.0" width="3.7" height="5.0" fill="#1010e6" rx=".8"/>
<path d="M299.0 245.0V301.0" stroke="#981414" stroke-width="1"/>
<rect x="297.1" y="290.0" width="3.7" height="11.0" fill="#f01c18" rx=".8"/>
<path d="M304.3 296.0V327.0" stroke="#981414" stroke-width="1"/>
<rect x="302.5" y="304.0" width="3.7" height="23.0" fill="#f01c18" rx=".8"/>
<path d="M309.7 315.0V334.0" stroke="#15159c" stroke-width="1"/>
<rect x="307.8" y="315.0" width="3.7" height="14.0" fill="#1010e6" rx=".8"/>
<path d="M315.0 302.0V326.0" stroke="#15159c" stroke-width="1"/>
<rect x="313.1" y="308.0" width="3.7" height="6.0" fill="#1010e6" rx=".8"/>
<path d="M320.3 272.0V303.0" stroke="#15159c" stroke-width="1"/>
<rect x="318.5" y="279.0" width="3.7" height="24.0" fill="#1010e6" rx=".8"/>
<path d="M325.7 273.0V312.0" stroke="#981414" stroke-width="1"/>
<rect x="323.8" y="282.0" width="3.7" height="21.0" fill="#f01c18" rx=".8"/>
<path d="M331.0 292.0V343.0" stroke="#15159c" stroke-width="1"/>
<rect x="329.1" y="292.0" width="3.7" height="10.0" fill="#1010e6" rx=".8"/>
<path d="M336.3 283.0V340.0" stroke="#981414" stroke-width="1"/>
<rect x="334.5" y="293.0" width="3.7" height="23.0" fill="#f01c18" rx=".8"/>
<path d="M341.7 290.0V326.0" stroke="#15159c" stroke-width="1"/>
<rect x="339.8" y="304.0" width="3.7" height="12.0" fill="#1010e6" rx=".8"/>
<rect x="345.1" y="304.0" width="3.7" height="47.0" fill="#f01c18" rx=".8"/>
<path d="M352.3 354.0V390.0" stroke="#981414" stroke-width="1"/>
<rect x="350.5" y="354.0" width="3.7" height="29.0" fill="#f01c18" rx=".8"/>
<path d="M357.7 346.0V399.0" stroke="#15159c" stroke-width="1"/>
<rect x="355.8" y="356.0" width="3.7" height="27.0" fill="#1010e6" rx=".8"/>
<path d="M363.0 335.0V354.0" stroke="#15159c" stroke-width="1"/>
<rect x="361.1" y="335.0" width="3.7" height="15.0" fill="#1010e6" rx=".8"/>
<rect x="366.5" y="314.0" width="3.7" height="21.0" fill="#1010e6" rx=".8"/>
<path d="M373.7 304.0V326.0" stroke="#15159c" stroke-width="1"/>
<rect x="371.8" y="304.0" width="3.7" height="11.0" fill="#1010e6" rx=".8"/>
<rect x="377.1" y="299.0" width="3.7" height="11.0" fill="#1010e6" rx=".8"/>
<path d="M384.3 267.0V302.0" stroke="#15159c" stroke-width="1"/>
<rect x="382.5" y="267.0" width="3.7" height="29.0" fill="#1010e6" rx=".8"/>
<path d="M389.7 267.0V312.0" stroke="#981414" stroke-width="1"/>
<rect x="387.8" y="267.0" width="3.7" height="37.0" fill="#f01c18" rx=".8"/>
<rect x="393.1" y="265.0" width="3.7" height="35.0" fill="#1010e6" rx=".8"/>
<path d="M400.3 258.0V298.0" stroke="#981414" stroke-width="1"/>
<rect x="398.5" y="266.0" width="3.7" height="5.0" fill="#f01c18" rx=".8"/>
<path d="M405.7 257.0V306.0" stroke="#981414" stroke-width="1"/>
<rect x="403.8" y="270.0" width="3.7" height="29.0" fill="#f01c18" rx=".8"/>
<path d="M411.0 257.0V299.0" stroke="#15159c" stroke-width="1"/>
<rect x="409.1" y="264.0" width="3.7" height="35.0" fill="#1010e6" rx=".8"/>
<path d="M416.3 258.0V296.0" stroke="#981414" stroke-width="1"/>
<rect x="414.5" y="265.0" width="3.7" height="13.0" fill="#f01c18" rx=".8"/>
<path d="M421.7 249.0V285.0" stroke="#15159c" stroke-width="1"/>
<rect x="419.8" y="254.0" width="3.7" height="31.0" fill="#1010e6" rx=".8"/>
<rect x="425.1" y="257.0" width="3.7" height="49.0" fill="#f01c18" rx=".8"/>
<path d="M432.3 294.0V320.0" stroke="#981414" stroke-width="1"/>
<rect x="430.5" y="303.0" width="3.7" height="15.0" fill="#f01c18" rx=".8"/>
<path d="M437.7 325.0V362.0" stroke="#981414" stroke-width="1"/>
<rect x="435.8" y="325.0" width="3.7" height="34.0" fill="#f01c18" rx=".8"/>
<rect x="441.1" y="353.0" width="3.7" height="7.0" fill="#1010e6" rx=".8"/>
<path d="M448.3 303.0V360.0" stroke="#15159c" stroke-width="1"/>
<rect x="446.5" y="306.0" width="3.7" height="50.0" fill="#1010e6" rx=".8"/>
<path d="M453.7 280.0V322.0" stroke="#981414" stroke-width="1"/>
<rect x="451.8" y="304.0" width="3.7" height="18.0" fill="#f01c18" rx=".8"/>
<path d="M459.0 318.0V342.0" stroke="#981414" stroke-width="1"/>
<rect x="457.1" y="324.0" width="3.7" height="18.0" fill="#f01c18" rx=".8"/>
<path d="M464.3 336.0V366.0" stroke="#981414" stroke-width="1"/>
<rect x="462.5" y="336.0" width="3.7" height="28.0" fill="#f01c18" rx=".8"/>
<rect x="467.8" y="264.0" width="3.7" height="98.0" fill="#1010e6" rx=".8"/>
<path d="M475.0 220.0V314.0" stroke="#981414" stroke-width="1"/>
<rect x="473.1" y="264.0" width="3.7" height="50.0" fill="#f01c18" rx=".8"/>
<path d="M480.3 305.0V329.0" stroke="#981414" stroke-width="1"/>
<rect x="478.5" y="309.0" width="3.7" height="18.0" fill="#f01c18" rx=".8"/>
<path d="M485.7 276.0V322.0" stroke="#15159c" stroke-width="1"/>
<rect x="483.8" y="290.0" width="3.7" height="32.0" fill="#1010e6" rx=".8"/>
<path d="M491.0 280.0V312.0" stroke="#15159c" stroke-width="1"/>
<rect x="489.1" y="286.0" width="3.7" height="7.0" fill="#1010e6" rx=".8"/>
<path d="M496.3 282.0V314.0" stroke="#981414" stroke-width="1"/>
<rect x="494.5" y="290.0" width="3.7" height="5.0" fill="#f01c18" rx=".8"/>
<path d="M501.7 300.0V340.0" stroke="#981414" stroke-width="1"/>
<rect x="499.8" y="306.0" width="3.7" height="26.0" fill="#f01c18" rx=".8"/>
<path d="M507.0 330.0V355.0" stroke="#981414" stroke-width="1"/>
<rect x="505.1" y="330.0" width="3.7" height="19.0" fill="#f01c18" rx=".8"/>
<path d="M512.3 310.0V348.0" stroke="#15159c" stroke-width="1"/>
<rect x="510.5" y="317.0" width="3.7" height="31.0" fill="#1010e6" rx=".8"/>
<path d="M517.7 313.0V326.0" stroke="#981414" stroke-width="1"/>
<rect x="515.8" y="317.0" width="3.7" height="8.0" fill="#f01c18" rx=".8"/>
<path d="M523.0 313.0V357.0" stroke="#981414" stroke-width="1"/>
<rect x="521.1" y="324.0" width="3.7" height="33.0" fill="#f01c18" rx=".8"/>
<path d="M528.3 336.0V362.0" stroke="#15159c" stroke-width="1"/>
<rect x="526.5" y="354.0" width="3.7" height="3.0" fill="#1010e6" rx=".8"/>
<path d="M533.7 352.0V376.0" stroke="#981414" stroke-width="1"/>
<rect x="531.8" y="360.0" width="3.7" height="3.0" fill="#f01c18" rx=".8"/>
<path d="M539.0 352.0V370.0" stroke="#981414" stroke-width="1"/>
<rect x="537.1" y="363.0" width="3.7" height="3.0" fill="#f01c18" rx=".8"/>
<path d="M544.3 344.0V365.0" stroke="#15159c" stroke-width="1"/>
<rect x="542.5" y="352.0" width="3.7" height="13.0" fill="#1010e6" rx=".8"/>
<path d="M549.7 348.0V381.0" stroke="#981414" stroke-width="1"/>
<rect x="547.8" y="351.0" width="3.7" height="30.0" fill="#f01c18" rx=".8"/>
<path d="M555.0 317.0V390.0" stroke="#15159c" stroke-width="1"/>
<rect x="553.1" y="317.0" width="3.7" height="66.0" fill="#1010e6" rx=".8"/>
<path d="M560.3 290.0V319.0" stroke="#15159c" stroke-width="1"/>
<rect x="558.5" y="302.0" width="3.7" height="17.0" fill="#1010e6" rx=".8"/>
<path d="M565.7 264.0V299.0" stroke="#15159c" stroke-width="1"/>
<rect x="563.8" y="272.0" width="3.7" height="27.0" fill="#1010e6" rx=".8"/>
<path d="M571.0 262.0V322.0" stroke="#981414" stroke-width="1"/>
<rect x="569.1" y="278.0" width="3.7" height="39.0" fill="#f01c18" rx=".8"/>
<path d="M576.3 286.0V320.0" stroke="#15159c" stroke-width="1"/>
<rect x="574.5" y="299.0" width="3.7" height="21.0" fill="#1010e6" rx=".8"/>
<path d="M581.7 293.0V343.0" stroke="#981414" stroke-width="1"/>
<rect x="579.8" y="293.0" width="3.7" height="46.0" fill="#f01c18" rx=".8"/>
<path d="M587.0 330.0V349.0" stroke="#981414" stroke-width="1"/>
<rect x="585.1" y="337.0" width="3.7" height="7.0" fill="#f01c18" rx=".8"/>
<path d="M592.3 323.0V346.0" stroke="#15159c" stroke-width="1"/>
<rect x="590.5" y="328.0" width="3.7" height="18.0" fill="#1010e6" rx=".8"/>
<rect x="595.8" y="322.0" width="3.7" height="10.0" fill="#1010e6" rx=".8"/>
<path d="M603.0 312.0V324.0" stroke="#15159c" stroke-width="1"/>
<rect x="601.1" y="315.0" width="3.7" height="9.0" fill="#1010e6" rx=".8"/>
<path d="M608.3 316.0V332.0" stroke="#d8ca48" stroke-width="1"/>
<path d="M606.1 320.0h4.400" stroke="#e6d850" stroke-width="1.200"/>
<path d="M613.7 273.0V323.0" stroke="#15159c" stroke-width="1"/>
<rect x="611.8" y="284.0" width="3.7" height="39.0" fill="#1010e6" rx=".8"/>
<path d="M619.0 275.0V288.0" stroke="#981414" stroke-width="1"/>
<rect x="617.1" y="281.0" width="3.7" height="1.5" fill="#f01c18" rx=".8"/>
<path d="M624.3 280.0V334.0" stroke="#981414" stroke-width="1"/>
<rect x="622.5" y="280.0" width="3.7" height="47.0" fill="#f01c18" rx=".8"/>
<path d="M629.7 276.0V325.0" stroke="#15159c" stroke-width="1"/>
<rect x="627.8" y="313.0" width="3.7" height="12.0" fill="#1010e6" rx=".8"/>
<path d="M635.0 314.0V326.0" stroke="#981414" stroke-width="1"/>
<rect x="633.1" y="314.0" width="3.7" height="2.0" fill="#f01c18" rx=".8"/>
<path d="M640.3 298.0V339.0" stroke="#981414" stroke-width="1"/>
<rect x="638.5" y="314.0" width="3.7" height="22.0" fill="#f01c18" rx=".8"/>
<path d="M645.7 328.0V376.0" stroke="#981414" stroke-width="1"/>
<rect x="643.8" y="334.0" width="3.7" height="6.0" fill="#f01c18" rx=".8"/>
<path d="M651.0 338.0V367.0" stroke="#981414" stroke-width="1"/>
<rect x="649.1" y="338.0" width="3.7" height="25.0" fill="#f01c18" rx=".8"/>
<path d="M656.3 350.0V450.0" stroke="#981414" stroke-width="1"/>
<rect x="654.5" y="362.0" width="3.7" height="66.0" fill="#f01c18" rx=".8"/>
<path d="M661.7 416.0V478.0" stroke="#981414" stroke-width="1"/>
<rect x="659.8" y="420.0" width="3.7" height="45.0" fill="#f01c18" rx=".8"/>
<path d="M667.0 400.0V503.0" stroke="#15159c" stroke-width="1"/>
<rect x="665.1" y="437.0" width="3.7" height="28.0" fill="#1010e6" rx=".8"/>
<path d="M672.3 412.0V450.0" stroke="#981414" stroke-width="1"/>
<rect x="670.5" y="437.0" width="3.7" height="6.0" fill="#f01c18" rx=".8"/>
<path d="M677.7 390.0V440.0" stroke="#15159c" stroke-width="1"/>
<rect x="675.8" y="400.0" width="3.7" height="16.0" fill="#1010e6" rx=".8"/>
<path d="M683.0 387.0V409.0" stroke="#15159c" stroke-width="1"/>
<rect x="681.1" y="395.0" width="3.7" height="6.0" fill="#1010e6" rx=".8"/>
<path d="M688.3 381.0V407.0" stroke="#981414" stroke-width="1"/>
<rect x="686.5" y="395.0" width="3.7" height="7.0" fill="#f01c18" rx=".8"/>
<path d="M693.7 375.0V432.0" stroke="#981414" stroke-width="1"/>
<rect x="691.8" y="404.0" width="3.7" height="7.0" fill="#f01c18" rx=".8"/>
<path d="M699.0 390.0V419.0" stroke="#15159c" stroke-width="1"/>
<rect x="697.1" y="390.0" width="3.7" height="27.0" fill="#1010e6" rx=".8"/>
<path d="M704.3 378.0V416.0" stroke="#981414" stroke-width="1"/>
<rect x="702.5" y="390.0" width="3.7" height="21.0" fill="#f01c18" rx=".8"/>
<path d="M709.7 381.0V417.0" stroke="#15159c" stroke-width="1"/>
<rect x="707.8" y="381.0" width="3.7" height="30.0" fill="#1010e6" rx=".8"/>
<path d="M715.0 381.0V396.0" stroke="#981414" stroke-width="1"/>
<rect x="713.1" y="381.0" width="3.7" height="8.0" fill="#f01c18" rx=".8"/>
<path d="M720.3 378.0V388.0" stroke="#15159c" stroke-width="1"/>
<rect x="718.5" y="378.0" width="3.7" height="8.0" fill="#1010e6" rx=".8"/>
<rect x="723.8" y="378.0" width="3.7" height="6.0" fill="#f01c18" rx=".8"/>
<rect x="729.1" y="354.0" width="3.7" height="29.0" fill="#1010e6" rx=".8"/>
<rect x="734.5" y="354.0" width="3.7" height="39.0" fill="#f01c18" rx=".8"/>
<rect x="739.8" y="374.0" width="3.7" height="16.0" fill="#1010e6" rx=".8"/>
<path d="M747.0 372.0V406.0" stroke="#981414" stroke-width="1"/>
<rect x="745.1" y="372.0" width="3.7" height="18.0" fill="#f01c18" rx=".8"/>
<path d="M752.3 377.0V405.0" stroke="#15159c" stroke-width="1"/>
<rect x="750.5" y="386.0" width="3.7" height="3.0" fill="#1010e6" rx=".8"/>
<path d="M757.7 360.0V393.0" stroke="#15159c" stroke-width="1"/>
<rect x="755.8" y="360.0" width="3.7" height="26.0" fill="#1010e6" rx=".8"/>
<path d="M763.0 354.0V373.0" stroke="#981414" stroke-width="1"/>
<rect x="761.1" y="357.0" width="3.7" height="16.0" fill="#f01c18" rx=".8"/>
<path d="M768.3 344.0V395.0" stroke="#15159c" stroke-width="1"/>
<rect x="766.5" y="358.0" width="3.7" height="8.0" fill="#1010e6" rx=".8"/>
<path d="M773.7 344.0V376.0" stroke="#15159c" stroke-width="1"/>
<rect x="771.8" y="344.0" width="3.7" height="16.0" fill="#1010e6" rx=".8"/>
<path d="M779.0 338.0V354.0" stroke="#15159c" stroke-width="1"/>
<rect x="777.1" y="343.0" width="3.7" height="3.0" fill="#1010e6" rx=".8"/>
<path d="M784.3 278.0V351.0" stroke="#15159c" stroke-width="1"/>
<rect x="782.5" y="278.0" width="3.7" height="66.0" fill="#1010e6" rx=".8"/>
<path d="M789.7 265.0V352.0" stroke="#981414" stroke-width="1"/>
<rect x="787.8" y="277.0" width="3.7" height="41.0" fill="#f01c18" rx=".8"/>
<path d="M795.0 302.0V330.0" stroke="#15159c" stroke-width="1"/>
<rect x="793.1" y="306.0" width="3.7" height="12.0" fill="#1010e6" rx=".8"/>
<path d="M800.3 277.0V318.0" stroke="#15159c" stroke-width="1"/>
<rect x="798.5" y="300.0" width="3.7" height="7.0" fill="#1010e6" rx=".8"/>
<path d="M805.7 261.0V300.0" stroke="#15159c" stroke-width="1"/>
<rect x="803.8" y="274.0" width="3.7" height="26.0" fill="#1010e6" rx=".8"/>
<path d="M811.0 244.0V276.0" stroke="#15159c" stroke-width="1"/>
<rect x="809.1" y="251.0" width="3.7" height="25.0" fill="#1010e6" rx=".8"/>
<path d="M816.3 228.0V262.0" stroke="#15159c" stroke-width="1"/>
<rect x="814.5" y="240.0" width="3.7" height="12.0" fill="#1010e6" rx=".8"/>
<path d="M821.7 224.0V240.0" stroke="#15159c" stroke-width="1"/>
<rect x="819.8" y="227.0" width="3.7" height="13.0" fill="#1010e6" rx=".8"/>
<rect x="825.1" y="229.0" width="3.7" height="26.0" fill="#f01c18" rx=".8"/>
<path d="M832.3 224.0V256.0" stroke="#15159c" stroke-width="1"/>
<rect x="830.5" y="252.0" width="3.7" height="3.0" fill="#1010e6" rx=".8"/>
<path d="M837.7 186.0V259.0" stroke="#15159c" stroke-width="1"/>
<rect x="835.8" y="186.0" width="3.7" height="67.0" fill="#1010e6" rx=".8"/>
<path d="M843.0 169.0V200.0" stroke="#15159c" stroke-width="1"/>
<rect x="841.1" y="176.0" width="3.7" height="10.0" fill="#1010e6" rx=".8"/>
<path d="M848.3 135.0V180.0" stroke="#15159c" stroke-width="1"/>
<rect x="846.5" y="149.0" width="3.7" height="29.0" fill="#1010e6" rx=".8"/>
<path d="M853.7 112.0V151.0" stroke="#15159c" stroke-width="1"/>
<rect x="851.8" y="135.0" width="3.7" height="16.0" fill="#1010e6" rx=".8"/>
<path d="M859.0 130.0V198.0" stroke="#981414" stroke-width="1"/>
<rect x="857.1" y="130.0" width="3.7" height="66.0" fill="#f01c18" rx=".8"/>
<path d="M864.3 166.0V216.0" stroke="#15159c" stroke-width="1"/>
<rect x="862.5" y="170.0" width="3.7" height="32.0" fill="#1010e6" rx=".8"/>
<path d="M869.7 136.0V177.0" stroke="#15159c" stroke-width="1"/>
<rect x="867.8" y="149.0" width="3.7" height="22.0" fill="#1010e6" rx=".8"/>
<path d="M875.0 147.0V164.0" stroke="#981414" stroke-width="1"/>
<rect x="873.1" y="149.0" width="3.7" height="15.0" fill="#f01c18" rx=".8"/>
<path d="M880.3 162.0V203.0" stroke="#981414" stroke-width="1"/>
<rect x="878.5" y="162.0" width="3.7" height="13.0" fill="#f01c18" rx=".8"/>
<path d="M885.7 120.0V186.0" stroke="#15159c" stroke-width="1"/>
<rect x="883.8" y="147.0" width="3.7" height="33.0" fill="#1010e6" rx=".8"/>
<path d="M891.0 143.0V170.0" stroke="#981414" stroke-width="1"/>
<rect x="889.1" y="146.0" width="3.7" height="24.0" fill="#f01c18" rx=".8"/>
<path d="M896.3 161.0V184.0" stroke="#981414" stroke-width="1"/>
<rect x="894.5" y="169.0" width="3.7" height="15.0" fill="#f01c18" rx=".8"/>
<path d="M901.7 183.0V218.0" stroke="#981414" stroke-width="1"/>
<rect x="899.8" y="183.0" width="3.7" height="33.0" fill="#f01c18" rx=".8"/>
<path d="M907.0 213.0V227.0" stroke="#981414" stroke-width="1"/>
<rect x="905.1" y="213.0" width="3.7" height="9.0" fill="#f01c18" rx=".8"/>
<path d="M912.3 207.0V228.0" stroke="#981414" stroke-width="1"/>
<rect x="910.5" y="216.0" width="3.7" height="12.0" fill="#f01c18" rx=".8"/>
<path d="M917.7 221.0V244.0" stroke="#981414" stroke-width="1"/>
<rect x="915.8" y="227.0" width="3.7" height="17.0" fill="#f01c18" rx=".8"/>
<path d="M923.0 233.0V255.0" stroke="#15159c" stroke-width="1"/>
<rect x="921.1" y="233.0" width="3.7" height="12.0" fill="#1010e6" rx=".8"/>
<path d="M928.3 220.0V234.0" stroke="#15159c" stroke-width="1"/>
<rect x="926.5" y="226.0" width="3.7" height="8.0" fill="#1010e6" rx=".8"/>
<path d="M933.7 208.0V234.0" stroke="#15159c" stroke-width="1"/>
<rect x="931.8" y="227.0" width="3.7" height="4.0" fill="#1010e6" rx=".8"/>
<path d="M939.0 222.0V260.0" stroke="#981414" stroke-width="1"/>
<rect x="937.1" y="230.0" width="3.7" height="25.0" fill="#f01c18" rx=".8"/>
<path d="M944.3 244.0V263.0" stroke="#981414" stroke-width="1"/>
<rect x="942.5" y="252.0" width="3.7" height="9.0" fill="#f01c18" rx=".8"/>
<rect x="947.8" y="236.0" width="3.7" height="25.0" fill="#1010e6" rx=".8"/>
<path d="M955.0 218.0V240.0" stroke="#15159c" stroke-width="1"/>
<rect x="953.1" y="232.0" width="3.7" height="8.0" fill="#1010e6" rx=".8"/>
<path d="M960.3 219.0V272.0" stroke="#981414" stroke-width="1"/>
<rect x="958.5" y="231.0" width="3.7" height="38.0" fill="#f01c18" rx=".8"/>
<path d="M965.7 232.0V267.0" stroke="#15159c" stroke-width="1"/>
<rect x="963.8" y="259.0" width="3.7" height="8.0" fill="#1010e6" rx=".8"/>
<path d="M971.0 259.0V288.0" stroke="#d8ca48" stroke-width="1"/>
<path d="M968.8 259.0h4.400" stroke="#e6d850" stroke-width="1.200"/>
<rect x="974.5" y="227.0" width="3.7" height="32.0" fill="#1010e6" rx=".8"/>
<rect x="979.8" y="230.0" width="3.7" height="23.0" fill="#f01c18" rx=".8"/>
<path d="M987.0 238.0V258.0" stroke="#15159c" stroke-width="1"/>
<rect x="985.1" y="246.0" width="3.7" height="5.0" fill="#1010e6" rx=".8"/>
<path d="M992.3 246.0V278.0" stroke="#981414" stroke-width="1"/>
<rect x="990.5" y="246.0" width="3.7" height="30.0" fill="#f01c18" rx=".8"/>
<path d="M997.7 216.0V279.0" stroke="#15159c" stroke-width="1"/>
<rect x="995.8" y="216.0" width="3.7" height="58.0" fill="#1010e6" rx=".8"/>
<path d="M1003.0 217.0V272.0" stroke="#981414" stroke-width="1"/>
<rect x="1001.1" y="223.0" width="3.7" height="32.0" fill="#f01c18" rx=".8"/>
<path d="M1008.3 238.0V266.0" stroke="#15159c" stroke-width="1"/>
<rect x="1006.5" y="238.0" width="3.7" height="18.0" fill="#1010e6" rx=".8"/>
<path d="M1013.7 184.0V240.0" stroke="#15159c" stroke-width="1"/>
<rect x="1011.8" y="188.0" width="3.7" height="52.0" fill="#1010e6" rx=".8"/>
<path d="M1019.0 190.0V215.0" stroke="#981414" stroke-width="1"/>
<rect x="1017.1" y="190.0" width="3.7" height="18.0" fill="#f01c18" rx=".8"/>
<path d="M1024.3 195.0V230.0" stroke="#981414" stroke-width="1"/>
<rect x="1022.5" y="200.0" width="3.7" height="21.0" fill="#f01c18" rx=".8"/>
<path d="M1029.7 200.0V234.0" stroke="#981414" stroke-width="1"/>
<rect x="1027.8" y="217.0" width="3.7" height="11.0" fill="#f01c18" rx=".8"/>
<path d="M1035.0 216.0V231.0" stroke="#15159c" stroke-width="1"/>
<rect x="1033.1" y="216.0" width="3.7" height="13.0" fill="#1010e6" rx=".8"/>
<path d="M1040.3 194.0V226.0" stroke="#15159c" stroke-width="1"/>
<rect x="1038.5" y="204.0" width="3.7" height="16.0" fill="#1010e6" rx=".8"/>
<path d="M1045.7 190.0V220.0" stroke="#981414" stroke-width="1"/>
<rect x="1043.8" y="207.0" width="3.7" height="3.0" fill="#f01c18" rx=".8"/>
<path d="M1051.0 154.0V215.0" stroke="#15159c" stroke-width="1"/>
<rect x="1049.1" y="169.0" width="3.7" height="40.0" fill="#1010e6" rx=".8"/>
<path d="M1056.3 123.0V183.0" stroke="#15159c" stroke-width="1"/>
<rect x="1054.5" y="157.0" width="3.7" height="19.0" fill="#1010e6" rx=".8"/>
<path d="M1061.7 114.0V188.0" stroke="#981414" stroke-width="1"/>
<rect x="1059.8" y="162.0" width="3.7" height="26.0" fill="#f01c18" rx=".8"/>
<path d="M1067.0 152.0V186.0" stroke="#15159c" stroke-width="1"/>
<rect x="1065.1" y="181.0" width="3.7" height="5.0" fill="#1010e6" rx=".8"/>
<path d="M1072.3 164.0V199.0" stroke="#15159c" stroke-width="1"/>
<rect x="1070.5" y="169.0" width="3.7" height="14.0" fill="#1010e6" rx=".8"/>
<path d="M1077.7 166.0V184.0" stroke="#15159c" stroke-width="1"/>
<rect x="1075.8" y="168.0" width="3.7" height="3.0" fill="#1010e6" rx=".8"/>
<rect x="1081.1" y="162.0" width="3.7" height="35.0" fill="#f01c18" rx=".8"/>
<path d="M1088.3 189.0V218.0" stroke="#981414" stroke-width="1"/>
<rect x="1086.5" y="195.0" width="3.7" height="20.0" fill="#f01c18" rx=".8"/>
<path d="M1093.7 203.0V229.0" stroke="#981414" stroke-width="1"/>
<rect x="1091.8" y="215.0" width="3.7" height="3.0" fill="#f01c18" rx=".8"/>
<path d="M1099.0 217.0V234.0" stroke="#981414" stroke-width="1"/>
<rect x="1097.1" y="217.0" width="3.7" height="15.0" fill="#f01c18" rx=".8"/>
<path d="M1104.3 200.0V240.0" stroke="#15159c" stroke-width="1"/>
<rect x="1102.5" y="207.0" width="3.7" height="25.0" fill="#1010e6" rx=".8"/>
<path d="M1109.7 181.0V211.0" stroke="#15159c" stroke-width="1"/>
<rect x="1107.8" y="187.0" width="3.7" height="21.0" fill="#1010e6" rx=".8"/>
<rect x="1113.1" y="186.0" width="3.7" height="23.0" fill="#f01c18" rx=".8"/>
<path d="M1120.3 205.0V226.0" stroke="#15159c" stroke-width="1"/>
<rect x="1118.5" y="206.0" width="3.7" height="4.0" fill="#1010e6" rx=".8"/>
<path d="M1125.7 186.0V227.0" stroke="#981414" stroke-width="1"/>
<rect x="1123.8" y="204.0" width="3.7" height="10.0" fill="#f01c18" rx=".8"/>
<path d="M1131.0 213.0V239.0" stroke="#981414" stroke-width="1"/>
<rect x="1129.1" y="213.0" width="3.7" height="19.0" fill="#f01c18" rx=".8"/>
<path d="M1136.3 193.0V239.0" stroke="#15159c" stroke-width="1"/>
<rect x="1134.5" y="193.0" width="3.7" height="39.0" fill="#1010e6" rx=".8"/>
<path d="M1141.7 191.0V218.0" stroke="#981414" stroke-width="1"/>
<rect x="1139.8" y="191.0" width="3.7" height="24.0" fill="#f01c18" rx=".8"/>
<path d="M1147.0 189.0V226.0" stroke="#15159c" stroke-width="1"/>
<rect x="1145.1" y="194.0" width="3.7" height="24.0" fill="#1010e6" rx=".8"/>
<path d="M1152.3 180.0V216.0" stroke="#981414" stroke-width="1"/>
<rect x="1150.5" y="193.0" width="3.7" height="18.0" fill="#f01c18" rx=".8"/>
<path d="M1157.7 154.0V208.0" stroke="#15159c" stroke-width="1"/>
<rect x="1155.8" y="162.0" width="3.7" height="46.0" fill="#1010e6" rx=".8"/>
<path d="M1163.0 162.0V201.0" stroke="#981414" stroke-width="1"/>
<rect x="1161.1" y="167.0" width="3.7" height="34.0" fill="#f01c18" rx=".8"/>
<path d="M1168.3 188.0V226.0" stroke="#981414" stroke-width="1"/>
<rect x="1166.5" y="202.0" width="3.7" height="21.0" fill="#f01c18" rx=".8"/>
<path d="M1173.7 176.0V224.0" stroke="#15159c" stroke-width="1"/>
<rect x="1171.8" y="181.0" width="3.7" height="43.0" fill="#1010e6" rx=".8"/>
<path d="M1179.0 151.0V208.0" stroke="#981414" stroke-width="1"/>
<rect x="1177.1" y="175.0" width="3.7" height="33.0" fill="#f01c18" rx=".8"/>
<path d="M1184.3 180.0V208.0" stroke="#15159c" stroke-width="1"/>
<rect x="1182.5" y="184.0" width="3.7" height="24.0" fill="#1010e6" rx=".8"/>
<path d="M1189.7 158.0V220.0" stroke="#981414" stroke-width="1"/>
<rect x="1187.8" y="187.0" width="3.7" height="33.0" fill="#f01c18" rx=".8"/>
<path d="M1195.0 192.0V282.0" stroke="#981414" stroke-width="1"/>
<rect x="1193.1" y="214.0" width="3.7" height="18.0" fill="#f01c18" rx=".8"/>
<path d="M1200.3 216.0V295.0" stroke="#15159c" stroke-width="1"/>
<rect x="1198.5" y="238.0" width="3.7" height="5.0" fill="#1010e6" rx=".8"/>
<path d="M1205.7 218.0V258.0" stroke="#15159c" stroke-width="1"/>
<rect x="1203.8" y="224.0" width="3.7" height="15.0" fill="#1010e6" rx=".8"/>
<path d="M1211.0 223.0V268.0" stroke="#981414" stroke-width="1"/>
<rect x="1209.1" y="223.0" width="3.7" height="34.0" fill="#f01c18" rx=".8"/>
<rect x="1214.5" y="227.0" width="3.7" height="29.0" fill="#1010e6" rx=".8"/>
<path d="M1221.7 224.0V294.0" stroke="#981414" stroke-width="1"/>
<rect x="1219.8" y="227.0" width="3.7" height="59.0" fill="#f01c18" rx=".8"/>
<path d="M1227.0 272.0V288.0" stroke="#981414" stroke-width="1"/>
<rect x="1225.1" y="283.0" width="3.7" height="5.0" fill="#f01c18" rx=".8"/>
</svg>
<span class="t " style="left:1247px;transform-origin:0 50%;top:116.2px;font-size:8.5px;color:#e6e6e6;transform:scaleX(0.9764);">2335.45</span>
<span class="t " style="left:1247px;transform-origin:0 50%;top:151.6px;font-size:8.5px;color:#e6e6e6;transform:scaleX(0.9764);">2334.90</span>
<span class="t " style="left:1247px;transform-origin:0 50%;top:186.9px;font-size:8.5px;color:#e6e6e6;transform:scaleX(0.9764);">2334.35</span>
<span class="t " style="left:1247px;transform-origin:0 50%;top:222.3px;font-size:8.5px;color:#e6e6e6;transform:scaleX(0.9764);">2333.80</span>
<span class="t " style="left:1247px;transform-origin:0 50%;top:254.6px;font-size:8.5px;color:#e6e6e6;transform:scaleX(0.9764);">2333.30</span>
<span class="t " style="left:1247px;transform-origin:0 50%;top:289.9px;font-size:8.5px;color:#e6e6e6;transform:scaleX(0.9764);">2332.75</span>
<span class="t " style="left:1247px;transform-origin:0 50%;top:325.4px;font-size:8.5px;color:#e6e6e6;transform:scaleX(0.9764);">2332.20</span>
<span class="t " style="left:1247px;transform-origin:0 50%;top:360.8px;font-size:8.5px;color:#e6e6e6;transform:scaleX(0.9764);">2331.65</span>
<span class="t " style="left:1247px;transform-origin:0 50%;top:396.1px;font-size:8.5px;color:#e6e6e6;transform:scaleX(0.9764);">2331.10</span>
<span class="t " style="left:1247px;transform-origin:0 50%;top:428.4px;font-size:8.5px;color:#e6e6e6;transform:scaleX(0.9764);">2330.60</span>
<span class="t " style="left:1247px;transform-origin:0 50%;top:463.8px;font-size:8.5px;color:#e6e6e6;transform:scaleX(0.9764);">2330.05</span>
<span class="t " style="left:1247px;transform-origin:0 50%;top:499.1px;font-size:8.5px;color:#e6e6e6;transform:scaleX(0.9764);">2329.50</span>
<div class="abs" style="left:1244px;top:284px;width:36px;height:9px;background:#f2f2f2;"></div>
<span class="t " style="left:1247px;transform-origin:0 50%;top:284.2px;font-size:8.5px;color:#000;transform:scaleX(0.9764);">2332.84</span>
<span class="t " style="left:186.5px;transform-origin:0 50%;top:520.2px;font-size:8.5px;color:#e6e6e6;transform:scaleX(0.9509);">5 Jun 2024</span>
<span class="t " style="left:250.3px;transform-origin:0 50%;top:520.2px;font-size:8.5px;color:#e6e6e6;transform:scaleX(0.9933);">5 Jun 11:52</span>
<span class="t " style="left:314.3px;transform-origin:0 50%;top:520.2px;font-size:8.5px;color:#e6e6e6;transform:scaleX(0.9791);">5 Jun 12:04</span>
<span class="t " style="left:378.3px;transform-origin:0 50%;top:520.2px;font-size:8.5px;color:#e6e6e6;transform:scaleX(0.9791);">5 Jun 12:16</span>
<span class="t " style="left:442.3px;transform-origin:0 50%;top:520.2px;font-size:8.5px;color:#e6e6e6;transform:scaleX(0.9791);">5 Jun 12:28</span>
<span class="t " style="left:506.3px;transform-origin:0 50%;top:520.2px;font-size:8.5px;color:#e6e6e6;transform:scaleX(0.9791);">5 Jun 12:40</span>
<span class="t " style="left:570.3px;transform-origin:0 50%;top:520.2px;font-size:8.5px;color:#e6e6e6;transform:scaleX(0.9791);">5 Jun 12:52</span>
<span class="t " style="left:634.3px;transform-origin:0 50%;top:520.2px;font-size:8.5px;color:#e6e6e6;transform:scaleX(0.9791);">5 Jun 13:04</span>
<span class="t " style="left:698.3px;transform-origin:0 50%;top:520.2px;font-size:8.5px;color:#e6e6e6;transform:scaleX(0.9791);">5 Jun 13:16</span>
<span class="t " style="left:762.3px;transform-origin:0 50%;top:520.2px;font-size:8.5px;color:#e6e6e6;transform:scaleX(0.9791);">5 Jun 13:28</span>
<span class="t " style="left:826.3px;transform-origin:0 50%;top:520.2px;font-size:8.5px;color:#e6e6e6;transform:scaleX(0.9791);">5 Jun 13:40</span>
<span class="t " style="left:890.3px;transform-origin:0 50%;top:520.2px;font-size:8.5px;color:#e6e6e6;transform:scaleX(0.9791);">5 Jun 13:52</span>
<span class="t " style="left:954.3px;transform-origin:0 50%;top:520.2px;font-size:8.5px;color:#e6e6e6;transform:scaleX(0.9791);">5 Jun 14:04</span>
<span class="t " style="left:1018.3px;transform-origin:0 50%;top:520.2px;font-size:8.5px;color:#e6e6e6;transform:scaleX(0.9791);">5 Jun 14:16</span>
<span class="t " style="left:1082.3px;transform-origin:0 50%;top:520.2px;font-size:8.5px;color:#e6e6e6;transform:scaleX(0.9791);">5 Jun 14:28</span>
<span class="t " style="left:1146.3px;transform-origin:0 50%;top:520.2px;font-size:8.5px;color:#e6e6e6;transform:scaleX(0.9791);">5 Jun 14:40</span>
<span class="t " style="left:1210.3px;transform-origin:0 50%;top:520.2px;font-size:8.5px;color:#e6e6e6;transform:scaleX(0.9791);">5 Jun 14:52</span>
<svg style="left:190px;top:94px" width="7" height="5" viewBox="0 0 7 5"><path d="M0 0h7L3.500 5z" fill="#eee"/></svg>
<span class="t " style="left:198.5px;transform-origin:0 50%;top:92.8px;font-size:8.5px;color:#e8e8e8;transform:scaleX(0.9766);">XAUUSD,M1&nbsp; 2332.92 2333.10 2332.84 2332.84</span>
<span class="t " style="left:1084px;transform-origin:0 50%;top:94.0px;font-size:8.5px;color:#e8e8e8;transform:scaleX(0.9541);">Profitable Gold Forex Robot v2_Update</span>
<svg style="left:1229px;top:92.700px" width="11" height="11" viewBox="0 0 11 11"><circle cx="5.500" cy="5.500" r="4.500" fill="none" stroke="#e8e8e8" stroke-width="1"/><circle cx="3.900" cy="4.300" r=".7" fill="#e8e8e8"/><circle cx="7.100" cy="4.300" r=".7" fill="#e8e8e8"/><path d="M3.300 6.500c1 1.600 3.400 1.600 4.400 0" stroke="#e8e8e8" stroke-width=".9" fill="none"/></svg>
<span class="t " style="left:320.3px;transform-origin:0 50%;top:110.8px;font-size:8.5px;color:#c8b070;transform:scaleX(0.7914);">Time</span>
<span class="t " style="left:343.6px;transform-origin:0 50%;top:110.8px;font-size:8.5px;color:#c8b070;transform:scaleX(0.8464);">In</span>
<span class="t " style="left:360.6px;transform-origin:0 50%;top:110.8px;font-size:8.5px;color:#c8b070;transform:scaleX(0.8236);">Currency</span>
<span class="t " style="left:394px;transform-origin:0 50%;top:110.8px;font-size:8.5px;color:#c8b070;transform:scaleX(0.8625);">Impact</span>
<span class="t " style="left:426.5px;transform-origin:0 50%;top:110.8px;font-size:8.5px;color:#c8b070;transform:scaleX(0.8643);">News Event</span>
<span class="t " style="left:320.3px;transform-origin:0 50%;top:127.1px;font-size:8.5px;color:#d8d8d8;transform:scaleX(0.8133);">15:15</span>
<span class="t " style="left:343.6px;transform-origin:0 50%;top:127.1px;font-size:8.5px;color:#d8d8d8;transform:scaleX(0.8269);">00h19m</span>
<span class="t " style="left:374px;transform-origin:0 50%;top:127.1px;font-size:8.5px;color:#d8d8d8;transform:scaleX(0.8358);">USD</span>
<span class="t " style="left:395.8px;transform-origin:0 50%;top:127.1px;font-size:8.5px;color:#e01818;transform:scaleX(0.8866);">High</span>
<span class="t " style="left:416.4px;transform-origin:0 50%;top:127.1px;font-size:8.5px;color:#d8d8d8;transform:scaleX(0.8223);">ADP Nonfarm Employment Change (M</span>
<span class="t " style="left:320.3px;transform-origin:0 50%;top:136.3px;font-size:8.5px;color:#d8d8d8;transform:scaleX(0.8133);">16:45</span>
<span class="t " style="left:343.6px;transform-origin:0 50%;top:136.3px;font-size:8.5px;color:#d8d8d8;transform:scaleX(0.8269);">01h49m</span>
<span class="t " style="left:374px;transform-origin:0 50%;top:136.3px;font-size:8.5px;color:#d8d8d8;transform:scaleX(0.8358);">USD</span>
<span class="t " style="left:395.8px;transform-origin:0 50%;top:136.3px;font-size:8.5px;color:#e01818;transform:scaleX(0.8866);">High</span>
<span class="t " style="left:416.4px;transform-origin:0 50%;top:136.3px;font-size:8.5px;color:#d8d8d8;transform:scaleX(0.8263);">S&amp;P Global Services PMI (May)</span>
<span class="t " style="left:320.3px;transform-origin:0 50%;top:145.6px;font-size:8.5px;color:#d8d8d8;transform:scaleX(0.8133);">17:00</span>
<span class="t " style="left:343.6px;transform-origin:0 50%;top:145.6px;font-size:8.5px;color:#d8d8d8;transform:scaleX(0.8269);">02h04m</span>
<span class="t " style="left:374px;transform-origin:0 50%;top:145.6px;font-size:8.5px;color:#d8d8d8;transform:scaleX(0.8358);">USD</span>
<span class="t " style="left:395.8px;transform-origin:0 50%;top:145.6px;font-size:8.5px;color:#e01818;transform:scaleX(0.8866);">High</span>
<span class="t " style="left:416.4px;transform-origin:0 50%;top:145.6px;font-size:8.5px;color:#d8d8d8;transform:scaleX(0.8346);">ISM Non-Manufacturing PMI (May)</span>
<span class="t " style="left:320.3px;transform-origin:0 50%;top:154.8px;font-size:8.5px;color:#d8d8d8;transform:scaleX(0.8133);">17:00</span>
<span class="t " style="left:343.6px;transform-origin:0 50%;top:154.8px;font-size:8.5px;color:#d8d8d8;transform:scaleX(0.8269);">02h04m</span>
<span class="t " style="left:374px;transform-origin:0 50%;top:154.8px;font-size:8.5px;color:#d8d8d8;transform:scaleX(0.8358);">USD</span>
<span class="t " style="left:395.8px;transform-origin:0 50%;top:154.8px;font-size:8.5px;color:#e01818;transform:scaleX(0.8866);">High</span>
<span class="t " style="left:416.4px;transform-origin:0 50%;top:154.8px;font-size:8.5px;color:#d8d8d8;transform:scaleX(0.8392);">ISM Non-Manufacturing Prices (Ma</span>
<span class="t " style="left:320.3px;transform-origin:0 50%;top:164.1px;font-size:8.5px;color:#d8d8d8;transform:scaleX(0.8133);">17:30</span>
<span class="t " style="left:343.6px;transform-origin:0 50%;top:164.1px;font-size:8.5px;color:#d8d8d8;transform:scaleX(0.8269);">02h34m</span>
<span class="t " style="left:374px;transform-origin:0 50%;top:164.1px;font-size:8.5px;color:#d8d8d8;transform:scaleX(0.8358);">USD</span>
<span class="t " style="left:395.8px;transform-origin:0 50%;top:164.1px;font-size:8.5px;color:#e01818;transform:scaleX(0.8866);">High</span>
<span class="t " style="left:416.4px;transform-origin:0 50%;top:164.1px;font-size:8.5px;color:#d8d8d8;transform:scaleX(0.8216);">Crude Oil Inventories</span>
<span class="t " style="left:196.4px;transform-origin:0 50%;top:145.8px;font-size:8.5px;color:#c8b070;transform:scaleX(0.8811);">Expected lot:</span>
<span class="t " style="left:249.3px;transform-origin:0 50%;top:145.8px;font-size:8.5px;color:#d8d8d8;transform:scaleX(0.8100);">0.01</span>
<span class="t " style="left:196.4px;transform-origin:0 50%;top:154.4px;font-size:8.5px;color:#c8b070;transform:scaleX(0.8157);">Forecast B/S:</span>
<span class="t " style="left:249.3px;transform-origin:0 50%;top:154.4px;font-size:8.5px;color:#d8d8d8;transform:scaleX(0.7837);">----/----</span>
<span class="t " style="left:196.4px;transform-origin:0 50%;top:163.2px;font-size:8.5px;color:#c8b070;transform:scaleX(0.8067);">Leverage:</span>
<span class="t " style="left:249.3px;transform-origin:0 50%;top:163.2px;font-size:8.5px;color:#d8d8d8;transform:scaleX(0.8556);">1:100</span>
<span class="t " style="left:196.4px;transform-origin:0 50%;top:171.8px;font-size:8.5px;color:#c8b070;transform:scaleX(0.8443);">Lots opened:</span>
<span class="t " style="left:249.3px;transform-origin:0 50%;top:171.8px;font-size:8.5px;color:#d8d8d8;transform:scaleX(0.8100);">0.00</span>
<span class="t " style="left:196.4px;transform-origin:0 50%;top:180.6px;font-size:8.5px;color:#c8b070;transform:scaleX(0.8285);">Floating PnL:</span>
<span class="t " style="left:249.3px;transform-origin:0 50%;top:180.6px;font-size:8.5px;color:#d8d8d8;transform:scaleX(0.8100);">0.00</span>
<span class="t " style="left:196.4px;transform-origin:0 50%;top:189.2px;font-size:8.5px;color:#c8b070;transform:scaleX(0.8035);">Comment:</span>
<span class="t " style="left:249.3px;transform-origin:0 50%;top:189.2px;font-size:8.5px;color:#d8d8d8;transform:scaleX(0.8193);">XAU Classic</span>
<span class="t " style="left:196.4px;transform-origin:0 50%;top:197.9px;font-size:8.5px;color:#c8b070;transform:scaleX(0.8619);">GMT offset:</span>
<span class="t " style="left:249.3px;transform-origin:0 50%;top:197.9px;font-size:8.5px;color:#d8d8d8;transform:scaleX(0.8365);">+3 (Updated)</span>
<span class="t " style="left:196.4px;transform-origin:0 50%;top:206.7px;font-size:8.5px;color:#c8b070;transform:scaleX(0.8330);">Events found:</span>
<span class="t " style="left:249.3px;transform-origin:0 50%;top:206.7px;font-size:8.5px;color:#d8d8d8;transform:scaleX(0.8447);">13 (2024.06.05)</span>
<span class="t " style="left:196.4px;transform-origin:0 50%;top:215.3px;font-size:8.5px;color:#c8b070;transform:scaleX(0.8197);">Next event in:</span>
<span class="t " style="left:249.3px;transform-origin:0 50%;top:215.3px;font-size:8.5px;color:#d8d8d8;transform:scaleX(0.8203);">00h19m (USD)</span>
<span class="t " style="left:196.4px;transform-origin:0 50%;top:227.9px;font-size:8.5px;color:#d8d8d8;transform:scaleX(0.8119);">&gt;ADP Nonfarm Employment C...</span>
<span class="t " style="left:196.4px;transform-origin:0 50%;top:243.4px;font-size:8.5px;color:#2a9ad8;transform:scaleX(0.8488);">Live trading</span>
<span class="t " style="left:194.3px;transform-origin:0 50%;top:282.9px;font-size:8.5px;color:#cfcfcf;transform:scaleX(0.8512);">v2.19</span>
<div class="abs" style="left:184px;top:533px;width:1096px;height:19px;background:#f0f0f0;"></div>
<div class="abs" style="left:184px;top:533px;width:1096px;height:1px;background:#9a9a9a;"></div>
<div class="abs" style="left:188px;top:533px;width:72px;height:17px;background:#fff;border:1px solid #333;border-top:none"></div>
<span class="t " style="left:196.5px;transform-origin:0 50%;top:536.2px;font-size:11.5px;color:#111;transform:scaleX(0.8197);">XAUUSD,M1</span>
<span class="t " style="left:269px;transform-origin:0 50%;top:536.2px;font-size:11.5px;color:#888;transform:scaleX(0.7979);">DXY_M4,H1</span>
<div class="abs" style="left:330px;top:536px;width:1px;height:13px;background:#999;"></div>
<svg style="left:1255px;top:538px" width="22" height="8" viewBox="0 0 22 8"><path d="M4.500 1L2 4l2.500 3M17.500 1L20 4l-2.500 3" stroke="#888" stroke-width="1.200" fill="none"/></svg>
<div class="abs" style="left:7px;top:552px;width:1273px;height:116px;background:#f0f0f0;"></div>
<div class="abs" style="left:8px;top:554px;width:10px;height:110px;background:#e8eef5;"></div>
<div class="abs" style="left:8px;top:598px;width:10px;height:66px;background:linear-gradient(#dfe7f0,#c5d3e3);"></div>
<svg style="left:9.500px;top:555.500px" width="6.500" height="6.500" viewBox="0 0 8 8"><path d="M1 1l6 6M7 1l-6 6" stroke="#111" stroke-width="1.500"/></svg>
<span class="t" style="left:9px;top:661.500px;font-size:9.500px;color:#222;transform-origin:0 0;transform:rotate(-90deg) scaleX(0.975)">Terminal</span>
<div class="abs" style="left:20px;top:554px;width:1260px;height:91px;background:#fff;border:1px solid #b4b4b4;border-right:none"></div>
<div class="abs" style="left:21px;top:572px;width:1259px;height:1px;background:#e5e5e5;"></div>
<div class="abs" style="left:144px;top:556px;width:1px;height:15px;background:#e4e4e4;"></div>
<div class="abs" style="left:317px;top:556px;width:1px;height:15px;background:#e4e4e4;"></div>
<div class="abs" style="left:404px;top:556px;width:1px;height:15px;background:#e4e4e4;"></div>
<div class="abs" style="left:471px;top:556px;width:1px;height:15px;background:#e4e4e4;"></div>
<div class="abs" style="left:557px;top:556px;width:1px;height:15px;background:#e4e4e4;"></div>
<div class="abs" style="left:654px;top:556px;width:1px;height:15px;background:#e4e4e4;"></div>
<div class="abs" style="left:749px;top:556px;width:1px;height:15px;background:#e4e4e4;"></div>
<div class="abs" style="left:845px;top:556px;width:1px;height:15px;background:#e4e4e4;"></div>
<div class="abs" style="left:1038px;top:556px;width:1px;height:15px;background:#e4e4e4;"></div>
<div class="abs" style="left:1134px;top:556px;width:1px;height:15px;background:#e4e4e4;"></div>
<span class="t " style="left:24px;transform-origin:0 50%;top:558.5px;font-size:10px;color:#222;transform:scaleX(0.9780);">Order</span>
<span class="t " style="left:58px;transform-origin:0 50%;top:558.5px;font-size:7px;color:#999;">/</span>
<span class="t " style="right:966.5px;transform-origin:100% 50%;top:558.5px;font-size:10px;color:#222;transform:scaleX(0.9610);">Time</span>
<span class="t " style="right:880.0px;transform-origin:100% 50%;top:558.5px;font-size:10px;color:#222;transform:scaleX(0.9225);">Type</span>
<span class="t " style="right:812.5px;transform-origin:100% 50%;top:558.5px;font-size:10px;color:#222;transform:scaleX(0.8996);">Size</span>
<span class="t " style="right:726.0px;transform-origin:100% 50%;top:558.5px;font-size:10px;color:#222;transform:scaleX(0.9746);">Symbol</span>
<span class="t " style="right:630.0px;transform-origin:100% 50%;top:558.5px;font-size:10px;color:#222;transform:scaleX(0.9875);">Price</span>
<span class="t " style="right:533.5px;transform-origin:100% 50%;top:558.5px;font-size:10px;color:#222;transform:scaleX(0.9238);">S / L</span>
<span class="t " style="right:246.0px;transform-origin:100% 50%;top:558.5px;font-size:10px;color:#222;transform:scaleX(1.0180);">Commission</span>
<span class="t " style="right:151.0px;transform-origin:100% 50%;top:558.5px;font-size:10px;color:#222;transform:scaleX(0.8994);">Swap</span>
<span class="t " style="right:2.5px;transform-origin:100% 50%;top:558.5px;font-size:10px;color:#222;transform:scaleX(1.0068);">Profit</span>
<div class="abs" style="left:21px;top:573px;width:1259px;height:16px;background:#d3d3d3;"></div>
<svg style="left:25px;top:577px" width="8" height="8" viewBox="0 0 8 8"><circle cx="4" cy="4" r="3" fill="#c8c8c8" stroke="#888" stroke-width="1"/></svg>
<span class="t " style="left:38px;transform-origin:0 50%;top:575.5px;font-size:10px;color:#111;font-weight:bold;transform:scaleX(0.9924);">Balance: 1 338.84 USD&nbsp; Equity: 1 338.84&nbsp; Free margin: 1 338.84</span>
<span class="t " style="right:1.5px;transform-origin:100% 50%;top:575.5px;font-size:10px;color:#111;font-weight:bold;transform:scaleX(1.0790);">0.00</span>
<div class="abs" style="left:20px;top:644px;width:1260px;height:1px;background:#8a8a8a;"></div>
<div class="abs" style="left:21.5px;top:644px;width:42.5px;height:17.8px;background:#fff;border:1px solid #444;border-top:none;border-radius:0 0 2px 2px"></div>
<span class="t " style="left:30px;transform-origin:0 50%;top:648.0px;font-size:10px;color:#111;transform:scaleX(0.9319);">Trade</span>
<span class="t " style="left:72.5px;transform-origin:0 50%;top:648.0px;font-size:10px;color:#808080;transform:scaleX(0.9113);">Exposure</span>
<span class="t " style="left:129px;transform-origin:0 50%;top:648.0px;font-size:10px;color:#808080;transform:scaleX(0.9854);">Account History</span>
<span class="t " style="left:215.5px;transform-origin:0 50%;top:648.0px;font-size:10px;color:#808080;transform:scaleX(0.9398);">News</span>
<span class="t " style="left:256px;transform-origin:0 50%;top:648.0px;font-size:10px;color:#808080;transform:scaleX(0.9780);">Alerts</span>
<span class="t " style="left:298px;transform-origin:0 50%;top:648.0px;font-size:10px;color:#808080;transform:scaleX(1.0302);">Mailbox</span>
<span class="t " style="left:357.5px;transform-origin:0 50%;top:648.0px;font-size:10px;color:#808080;transform:scaleX(0.9816);">Market</span>
<span class="t " style="left:421px;transform-origin:0 50%;top:648.0px;font-size:10px;color:#808080;transform:scaleX(0.9761);">Articles</span>
<span class="t " style="left:470px;transform-origin:0 50%;top:648.0px;font-size:10px;color:#808080;transform:scaleX(0.9297);">Code Base</span>
<span class="t " style="left:533.5px;transform-origin:0 50%;top:648.0px;font-size:10px;color:#808080;transform:scaleX(0.9291);">Experts</span>
<span class="t " style="left:581.5px;transform-origin:0 50%;top:648.0px;font-size:10px;color:#808080;transform:scaleX(0.9451);">Journal</span>
<div class="abs" style="left:120px;top:647px;width:1px;height:13px;background:#aaa;"></div>
<div class="abs" style="left:206px;top:647px;width:1px;height:13px;background:#aaa;"></div>
<div class="abs" style="left:247px;top:647px;width:1px;height:13px;background:#aaa;"></div>
<div class="abs" style="left:289px;top:647px;width:1px;height:13px;background:#aaa;"></div>
<div class="abs" style="left:348px;top:647px;width:1px;height:13px;background:#aaa;"></div>
<div class="abs" style="left:410px;top:647px;width:1px;height:13px;background:#aaa;"></div>
<div class="abs" style="left:461px;top:647px;width:1px;height:13px;background:#aaa;"></div>
<div class="abs" style="left:524px;top:647px;width:1px;height:13px;background:#aaa;"></div>
<div class="abs" style="left:573px;top:647px;width:1px;height:13px;background:#aaa;"></div>
<div class="abs" style="left:621px;top:647px;width:1px;height:13px;background:#aaa;"></div>
<span class="t " style="left:336px;transform-origin:0 50%;top:652.8px;font-size:7.5px;color:#d02020;font-weight:bold;">7</span>
<span class="t " style="left:391px;transform-origin:0 50%;top:652.8px;font-size:7.5px;color:#d02020;font-weight:bold;transform:scaleX(1.0388);">102</span>
<div class="abs" style="left:7px;top:666px;width:1273px;height:14px;background:#f0f0f0;border-top:1px solid #d6d6d6"></div>
<span class="t " style="left:7px;transform-origin:0 50%;top:673.0px;font-size:10px;color:#222;transform:scaleX(0.9420);">For Help, press F1</span>
<span class="t " style="left:693px;transform-origin:0 50%;top:673.0px;font-size:10px;color:#222;transform:scaleX(1.0099);">Default</span>
<div class="abs" style="left:688px;top:668px;width:1px;height:12px;background:#c9c9c9;"></div>
<div class="abs" style="left:788px;top:668px;width:1px;height:12px;background:#c9c9c9;"></div>
<div class="abs" style="left:875px;top:668px;width:1px;height:12px;background:#c9c9c9;"></div>
<div class="abs" style="left:935px;top:668px;width:1px;height:12px;background:#c9c9c9;"></div>
<div class="abs" style="left:994px;top:668px;width:1px;height:12px;background:#c9c9c9;"></div>
<div class="abs" style="left:1050px;top:668px;width:1px;height:12px;background:#c9c9c9;"></div>
<div class="abs" style="left:1108px;top:668px;width:1px;height:12px;background:#c9c9c9;"></div>
<div class="abs" style="left:1165px;top:668px;width:1px;height:12px;background:#c9c9c9;"></div>
<div class="abs" style="left:1169px;top:672px;width:2px;height:8px;background:#3aa03a;"></div>
<div class="abs" style="left:1172px;top:672px;width:2px;height:8px;background:#3aa03a;"></div>
<div class="abs" style="left:1175px;top:672px;width:2px;height:8px;background:#3aa03a;"></div>
<div class="abs" style="left:1178px;top:672px;width:2px;height:8px;background:#3aa03a;"></div>
<div class="abs" style="left:1181px;top:672px;width:2px;height:8px;background:#c04030;"></div>
<div class="abs" style="left:1184px;top:672px;width:2px;height:8px;background:#c04030;"></div>
<div class="abs" style="left:1187px;top:672px;width:2px;height:8px;background:#c04030;"></div>
<span class="t " style="left:1192.5px;transform-origin:0 50%;top:673.0px;font-size:10px;color:#222;transform:scaleX(0.9991);">27154/28 kb</span>
<div class="abs" style="left:0px;top:680px;width:1280px;height:40px;background:linear-gradient(90deg,#e5e8cb 0%,#e6e8d0 35%,#e6e6d6 60%,#e8e6df 80%,#e9e7e3 100%);border-top:1px solid #d3d5c4"></div>
<svg style="left:17px;top:684px" width="26" height="26" viewBox="0 0 26 26"><defs><radialGradient id="sun" cx=".4" cy=".35" r=".7"><stop offset="0" stop-color="#ffd23a"/><stop offset="1" stop-color="#f07a10"/></radialGradient></defs><circle cx="11" cy="15" r="9" fill="url(#sun)"/><circle cx="17" cy="7.500" r="6.500" fill="#c8281e"/></svg>
<span class="t " style="left:31.5px;transform-origin:0 50%;top:686.8px;font-size:9.5px;color:#fff;font-weight:bold;">1</span>
<span class="t " style="left:43px;transform-origin:0 50%;top:688.0px;font-size:10px;color:#222;transform:scaleX(0.9175);">36°C</span>
<span class="t " style="left:43px;transform-origin:0 50%;top:701.3px;font-size:10px;color:#666;transform:scaleX(0.9522);">Sunny</span>
<svg style="left:372px;top:691px" width="19" height="19" viewBox="0 0 19 19"><defs><linearGradient id="wn" x1="0" y1="0" x2="1" y2="1"><stop offset="0" stop-color="#35b6f2"/><stop offset="1" stop-color="#0a6fd0"/></linearGradient></defs><g fill="url(#wn)"><rect x="0" y="0" width="9" height="9"/><rect x="10" y="0" width="9" height="9"/><rect x="0" y="10" width="9" height="9"/><rect x="10" y="10" width="9" height="9"/></g></svg>
<div class="abs" style="left:403px;top:687px;width:181px;height:25.5px;background:#f4f4ea;border-radius:13px;border:1px solid #e0e2d2"></div>
<svg style="left:412px;top:693.500px" width="12.500" height="12.500" viewBox="0 0 15 15"><circle cx="6" cy="6" r="4.600" fill="none" stroke="#222" stroke-width="1.500"/><path d="M9.500 9.500l4 4" stroke="#222" stroke-width="1.700" stroke-linecap="round"/></svg>
<span class="t " style="left:432.5px;transform-origin:0 50%;top:694.5px;font-size:11px;color:#5a5a5a;transform:scaleX(0.9898);">Search</span>
<svg style="left:540.500px;top:692.500px" width="40" height="19" viewBox="0 0 42 20"><path d="M2 16c4-3 8-3 12 0s8 2 12-1 8-2 14 1" stroke="#6a7a3a" stroke-width="2" fill="none"/><g fill="#5aa02c"><ellipse cx="8" cy="8" rx="3.500" ry="5"/><ellipse cx="16" cy="6" rx="3" ry="4.500"/><ellipse cx="24" cy="8" rx="3.500" ry="5"/><ellipse cx="32" cy="6.500" rx="3" ry="4.500"/></g><g fill="#e8b030"><circle cx="12" cy="5" r="1.600"/><circle cx="28" cy="4" r="1.600"/><circle cx="20" cy="11" r="1.500"/></g><g fill="#c03a2a"><circle cx="5" cy="12" r="1.300"/><circle cx="36" cy="11" r="1.400"/></g></svg>
<svg style="left:596px;top:692px" width="18" height="17" viewBox="0 0 18 17"><rect x="4" y="1" width="13" height="11" rx="1.500" fill="#c9c9c9" stroke="#fff" stroke-width="1"/><rect x="1" y="4.500" width="13" height="11" rx="1.500" fill="#222"/></svg>
<div class="abs" style="left:627px;top:683.5px;width:31.5px;height:33px;background:#f1f1e6;border-radius:4px;border:1px solid #e6e7d8"></div>
<svg style="left:632.500px;top:690px" width="20" height="20" viewBox="0 0 21 21"><circle cx="10.500" cy="10.500" r="10" fill="url(#gF)"/><text x="10.700" y="15.300" text-anchor="middle" font-family="Liberation Sans,sans-serif" font-weight="bold" font-size="13.500" fill="#fff">F</text></svg>
<div class="abs" style="left:636px;top:713.5px;width:13.5px;height:2.5px;background:#2a9aa8;border-radius:2px"></div>
<svg style="left:670.500px;top:691.500px" width="18.500" height="16.800" viewBox="0 0 22 20"><circle cx="15" cy="4.500" r="3" fill="#8b93f0"/><circle cx="20" cy="6" r="2" fill="#6a72dc"/><rect x="10" y="7.500" width="11" height="9" rx="3" fill="#8b93f0"/><rect x="1" y="4" width="12" height="12" rx="2" fill="#f3f3fc" stroke="#c9ccf2" stroke-width=".8"/><text x="7" y="13.800" text-anchor="middle" font-family="Liberation Sans,sans-serif" font-weight="bold" font-size="10" fill="#5059c9">T</text></svg>
<svg style="left:705px;top:689.800px" width="21" height="21" viewBox="0 0 23 23"><defs><linearGradient id="ed" x1="0" y1="0" x2="1" y2="1"><stop offset="0" stop-color="#35c1f1"/><stop offset=".6" stop-color="#1b78c8"/><stop offset="1" stop-color="#2fbf6a"/></linearGradient></defs><circle cx="11.500" cy="11.500" r="11" fill="url(#ed)"/><path d="M5 13c0-5 5-7 8.500-5.500 3 1.300 3.500 4 3 5.500h-7c0 2 2.500 4 6 3-2 3-10.500 3-10.500-3z" fill="#fff" opacity=".9"/></svg>
<svg style="left:742.500px;top:691.500px" width="20.500" height="17.500" viewBox="0 0 23 19"><path d="M1 2.500C1 1.700 1.600 1 2.500 1H8l2 2h10.500c.8 0 1.500.700 1.500 1.500V6H1z" fill="#e8a920"/><rect x="1" y="5" width="21" height="13" rx="1.500" fill="#fcd34d"/><rect x="7" y="13" width="9" height="5" fill="#3a78c8"/></svg>
<svg style="left:779.500px;top:690.300px" width="19.800" height="19.800" viewBox="0 0 22 22"><path d="M7 5V3.500C7 2.700 7.700 2 8.500 2h5c.8 0 1.500.700 1.500 1.500V5" stroke="#2d6fc4" stroke-width="1.600" fill="none"/><rect x="1" y="5" width="20" height="16" rx="2" fill="#2f7ad8"/><rect x="6" y="8.500" width="4.500" height="4.500" fill="#f25022"/><rect x="11.500" y="8.500" width="4.500" height="4.500" fill="#7fba00"/><rect x="6" y="14" width="4.500" height="4.500" fill="#00a4ef"/><rect x="11.500" y="14" width="4.500" height="4.500" fill="#ffb900"/></svg>
<svg style="left:815.500px;top:690px" width="20.500" height="20.500" viewBox="0 0 23 23"><rect x="0" y="0" width="23" height="23" rx="2" fill="#1f4e8c"/><text x="11.800" y="18.500" text-anchor="middle" font-family="Liberation Sans,sans-serif" font-weight="bold" font-size="18" fill="#fff">P</text><path d="M7 18.500h9" stroke="#fff" stroke-width="1.800"/></svg>
<svg style="left:852.500px;top:690px" width="20.300" height="20.300" viewBox="0 0 23 23"><rect width="23" height="23" rx="1" fill="#111"/><path d="M3 11V7M5.500 11V5M8 11V3.500" stroke="#3fd03f" stroke-width="1.800"/><text x="10" y="11" font-family="Liberation Sans,sans-serif" font-weight="bold" font-size="8" fill="#fff">IC</text><text x="2" y="16.500" font-family="Liberation Sans,sans-serif" font-size="4.200" fill="#fff">Markets</text><text x="3" y="21" font-family="Liberation Sans,sans-serif" font-size="4.200" fill="#3fd03f">Global</text></svg>
<div class="abs" style="left:883px;top:683.5px;width:32px;height:33px;background:#f0efe6;border-radius:4px;border:1px solid #e4e4d8"></div>
<svg style="left:889.500px;top:689.500px" width="23" height="21.200" viewBox="0 0 26 24"><circle cx="11" cy="13" r="10" fill="#2aa1dc"/><path d="M5 12.500l11-4.500-1.800 9.500-3.200-2.400-1.700 1.600-.3-2.800 4.800-4.300-6 3.700z" fill="#fff"/><rect x="14" y="1" width="12" height="9" rx="3" fill="#9aa0a6"/><text x="15.500" y="8" font-family="Liberation Sans,sans-serif" font-size="6.500" fill="#fff">39</text></svg>
<div class="abs" style="left:713.8px;top:713.5px;width:4.5px;height:2px;background:#8a8c86;border-radius:1px"></div>
<div class="abs" style="left:750.5px;top:713.5px;width:4.5px;height:2px;background:#8a8c86;border-radius:1px"></div>
<div class="abs" style="left:823.8px;top:713.5px;width:4.5px;height:2px;background:#8a8c86;border-radius:1px"></div>
<div class="abs" style="left:860.0px;top:713.5px;width:4.5px;height:2px;background:#8a8c86;border-radius:1px"></div>
<div class="abs" style="left:896.8px;top:713.5px;width:4.5px;height:2px;background:#8a8c86;border-radius:1px"></div>
<svg style="left:1040px;top:696px" width="11" height="7" viewBox="0 0 11 7"><path d="M1 6l4.500-4.500L10 6" stroke="#222" stroke-width="1.400" fill="none"/></svg>
<span class="t " style="left:1068.5px;transform-origin:0 50%;top:688.7px;font-size:10px;color:#222;transform:scaleX(0.8768);">ENG</span>
<span class="t " style="left:1072.5px;transform-origin:0 50%;top:701.8px;font-size:10px;color:#222;transform:scaleX(0.8278);">US</span>
<svg style="left:1100px;top:692px" width="17" height="14" viewBox="0 0 17 14"><g fill="none" stroke="#222" stroke-width="1.300"><path d="M1 5c4-4.500 11-4.500 15 0"/><path d="M3.500 7.500c3-3 7-3 10 0"/><path d="M6 10c1.500-1.500 3.500-1.500 5 0"/></g><circle cx="8.500" cy="12" r="1.200" fill="#222"/></svg>
<svg style="left:1121px;top:692px" width="16" height="14" viewBox="0 0 16 14"><path d="M1 5h3l4-3.500v11L4 9H1z" fill="none" stroke="#222" stroke-width="1.200"/><path d="M10.500 4.500c1.500 1.500 1.500 3.500 0 5M12.500 2.500c3 2.500 3 6.500 0 9" stroke="#222" stroke-width="1.200" fill="none"/></svg>
<svg style="left:1141px;top:692px" width="18" height="14" viewBox="0 0 18 14"><rect x="2" y="4" width="14" height="8" rx="2" fill="#222"/><path d="M5 4V2h3v2" stroke="#222" stroke-width="1.200" fill="none"/><path d="M6 8l3-2v4z" fill="#fff"/></svg>
<span class="t " style="right:70.0px;transform-origin:100% 50%;top:688.3px;font-size:10px;color:#222;transform:scaleX(0.9398);">3:55 PM</span>
<span class="t " style="right:70.0px;transform-origin:100% 50%;top:701.6px;font-size:10px;color:#222;transform:scaleX(1.0276);">5/6/2024</span>
<svg style="left:1216px;top:692px" width="14" height="16" viewBox="0 0 14 16"><path d="M7 1c3 0 4.500 2.200 4.500 5v3l1.500 2.500H1L2.500 9V6C2.500 3.200 4 1 7 1z" fill="#1a8a7a"/><path d="M5 13c.5 1.500 3.500 1.500 4 0" fill="#1a8a7a"/></svg>
<svg style="left:1240px;top:687px" width="26" height="26" viewBox="0 0 26 26"><defs><linearGradient id="cp" x1="0" y1="0" x2="1" y2="1"><stop offset="0" stop-color="#2aa8f0"/><stop offset=".5" stop-color="#a050e0"/><stop offset="1" stop-color="#f0a030"/></linearGradient></defs><path d="M6 3h9l3 4h5l-4 12h-9l-3-4H2z" fill="url(#cp)"/><rect x="6" y="16" width="16" height="7" rx="2" fill="#f0c040"/><text x="8" y="21.800" font-family="Liberation Sans,sans-serif" font-weight="bold" font-size="6" fill="#333">PRE</text></svg>
<div class="abs" style="left:807.5px;top:542.5px;width:180.5px;height:127.5px;background:#f5f5f3;border-radius:8px;border:1px solid #e2e2de;box-shadow:0 2px 8px rgba(0,0,0,.14)"></div>
<svg style="left:815px;top:552px" width="14" height="14" viewBox="0 0 14 14"><circle cx="7" cy="7" r="7" fill="#2f9ad8"/><rect x="6" y="4" width="7" height="6" rx="1" fill="#9aa8b4"/><path d="M2.500 7l4-1.800-.7 3.600z" fill="#fff"/></svg>
<span class="t " style="left:835px;transform-origin:0 50%;top:554.0px;font-size:11.5px;color:#222;transform:scaleX(0.8546);">Ava trade Official Signals @ As...</span>
<div class="abs" style="left:814.5px;top:576px;width:167px;height:88px;background:#fcfcfc;"></div>
<div class="abs" style="left:815px;top:583px;width:59px;height:7px;background:#3d9fdc;"></div>
<div class="abs" style="left:815px;top:658.5px;width:59px;height:4.5px;background:#3d9fdc;"></div>
<div class="abs" style="left:875px;top:577px;width:1px;height:86px;background:#dcdcdc;"></div>
<div class="abs" style="left:876px;top:577px;width:105px;height:11px;background:#f4f4f4;"></div>
<div class="abs" style="left:923px;top:588px;width:58px;height:69px;background:linear-gradient(135deg,#8fb878,#7fae7a 50%,#b8c898);"></div>
<div class="abs" style="left:899px;top:592px;width:20px;height:2px;background:#2a7ad8;"></div>
<div class="abs" style="left:816.5px;top:590.2px;width:4.6px;height:4.6px;background:#4aa0e0;border-radius:2.300px"></div>
<div class="abs" style="left:823px;top:591.0px;width:14px;height:1px;background:#b8c4d0;"></div>
<div class="abs" style="left:823px;top:593.3px;width:24px;height:1px;background:#cfe3f3;"></div>
<div class="abs" style="left:816.5px;top:597.0px;width:4.6px;height:4.6px;background:#5a9ae0;border-radius:2.300px"></div>
<div class="abs" style="left:823px;top:597.8px;width:21px;height:1px;background:#b8c4d0;"></div>
<div class="abs" style="left:823px;top:600.0999999999999px;width:29px;height:1px;background:#cfe3f3;"></div>
<div class="abs" style="left:816.5px;top:603.8000000000001px;width:4.6px;height:4.6px;background:#c07050;border-radius:2.300px"></div>
<div class="abs" style="left:823px;top:604.6px;width:16px;height:1px;background:#b8c4d0;"></div>
<div class="abs" style="left:823px;top:606.9px;width:34px;height:1px;background:#cfe3f3;"></div>
<div class="abs" style="left:816.5px;top:610.6px;width:4.6px;height:4.6px;background:#8a70d0;border-radius:2.300px"></div>
<div class="abs" style="left:823px;top:611.4px;width:23px;height:1px;background:#b8c4d0;"></div>
<div class="abs" style="left:823px;top:613.6999999999999px;width:25px;height:1px;background:#cfe3f3;"></div>
<div class="abs" style="left:816.5px;top:617.4000000000001px;width:4.6px;height:4.6px;background:#222;border-radius:2.300px"></div>
<div class="abs" style="left:823px;top:618.2px;width:18px;height:1px;background:#b8c4d0;"></div>
<div class="abs" style="left:823px;top:620.5px;width:30px;height:1px;background:#cfe3f3;"></div>
<div class="abs" style="left:816.5px;top:624.2px;width:4.6px;height:4.6px;background:#6080c0;border-radius:2.300px"></div>
<div class="abs" style="left:823px;top:625.0px;width:25px;height:1px;background:#b8c4d0;"></div>
<div class="abs" style="left:823px;top:627.3px;width:35px;height:1px;background:#cfe3f3;"></div>
<div class="abs" style="left:816.5px;top:631.0px;width:4.6px;height:4.6px;background:#40a0d0;border-radius:2.300px"></div>
<div class="abs" style="left:823px;top:631.8px;width:20px;height:1px;background:#b8c4d0;"></div>
<div class="abs" style="left:823px;top:634.0999999999999px;width:26px;height:1px;background:#cfe3f3;"></div>
<div class="abs" style="left:816.5px;top:637.8000000000001px;width:4.6px;height:4.6px;background:#50b050;border-radius:2.300px"></div>
<div class="abs" style="left:823px;top:638.6px;width:15px;height:1px;background:#b8c4d0;"></div>
<div class="abs" style="left:823px;top:640.9px;width:31px;height:1px;background:#cfe3f3;"></div>
<div class="abs" style="left:816.5px;top:644.6px;width:4.6px;height:4.6px;background:#9070d0;border-radius:2.300px"></div>
<div class="abs" style="left:823px;top:645.4px;width:22px;height:1px;background:#b8c4d0;"></div>
<div class="abs" style="left:823px;top:647.6999999999999px;width:36px;height:1px;background:#cfe3f3;"></div>
<div class="abs" style="left:816.5px;top:651.4000000000001px;width:4.6px;height:4.6px;background:#e09040;border-radius:2.300px"></div>
<div class="abs" style="left:823px;top:652.2px;width:17px;height:1px;background:#b8c4d0;"></div>
<div class="abs" style="left:823px;top:654.5px;width:27px;height:1px;background:#cfe3f3;"></div>
<div class="abs" style="left:886px;top:600px;width:1px;height:28px;background:#9aa;"></div>
<div class="abs" style="left:890px;top:606px;width:1px;height:18px;background:#9aa;"></div>
<div class="abs" style="left:899px;top:596px;width:7px;height:1.5px;background:#d88;"></div>
<div class="abs" style="left:918px;top:596px;width:3px;height:1.5px;background:#7ae;"></div>
<div class="abs" style="left:899px;top:600px;width:7px;height:1.5px;background:#d88;"></div>
<div class="abs" style="left:918px;top:600px;width:3px;height:1.5px;background:#7ae;"></div>
<div class="abs" style="left:899px;top:604px;width:7px;height:1.5px;background:#d88;"></div>
<div class="abs" style="left:918px;top:604px;width:3px;height:1.5px;background:#7ae;"></div>
<div class="abs" style="left:899px;top:608px;width:7px;height:1.5px;background:#d88;"></div>
<div class="abs" style="left:918px;top:608px;width:3px;height:1.5px;background:#7ae;"></div>
<div class="abs" style="left:899px;top:612px;width:7px;height:1.5px;background:#d88;"></div>
<div class="abs" style="left:918px;top:612px;width:3px;height:1.5px;background:#7ae;"></div>
<div class="abs" style="left:899px;top:616px;width:7px;height:1.5px;background:#d88;"></div>
<div class="abs" style="left:918px;top:616px;width:3px;height:1.5px;background:#7ae;"></div>
<div class="abs" style="left:899px;top:620px;width:7px;height:1.5px;background:#d88;"></div>
<div class="abs" style="left:918px;top:620px;width:3px;height:1.5px;background:#7ae;"></div>
<div class="abs" style="left:899px;top:624px;width:7px;height:1.5px;background:#d88;"></div>
<div class="abs" style="left:918px;top:624px;width:3px;height:1.5px;background:#7ae;"></div>
<div class="abs" style="left:899px;top:628px;width:7px;height:1.5px;background:#d88;"></div>
<div class="abs" style="left:918px;top:628px;width:3px;height:1.5px;background:#7ae;"></div>
<div class="abs" style="left:886px;top:649px;width:20px;height:1.5px;background:#e66;"></div>
</div>
</body></html>
